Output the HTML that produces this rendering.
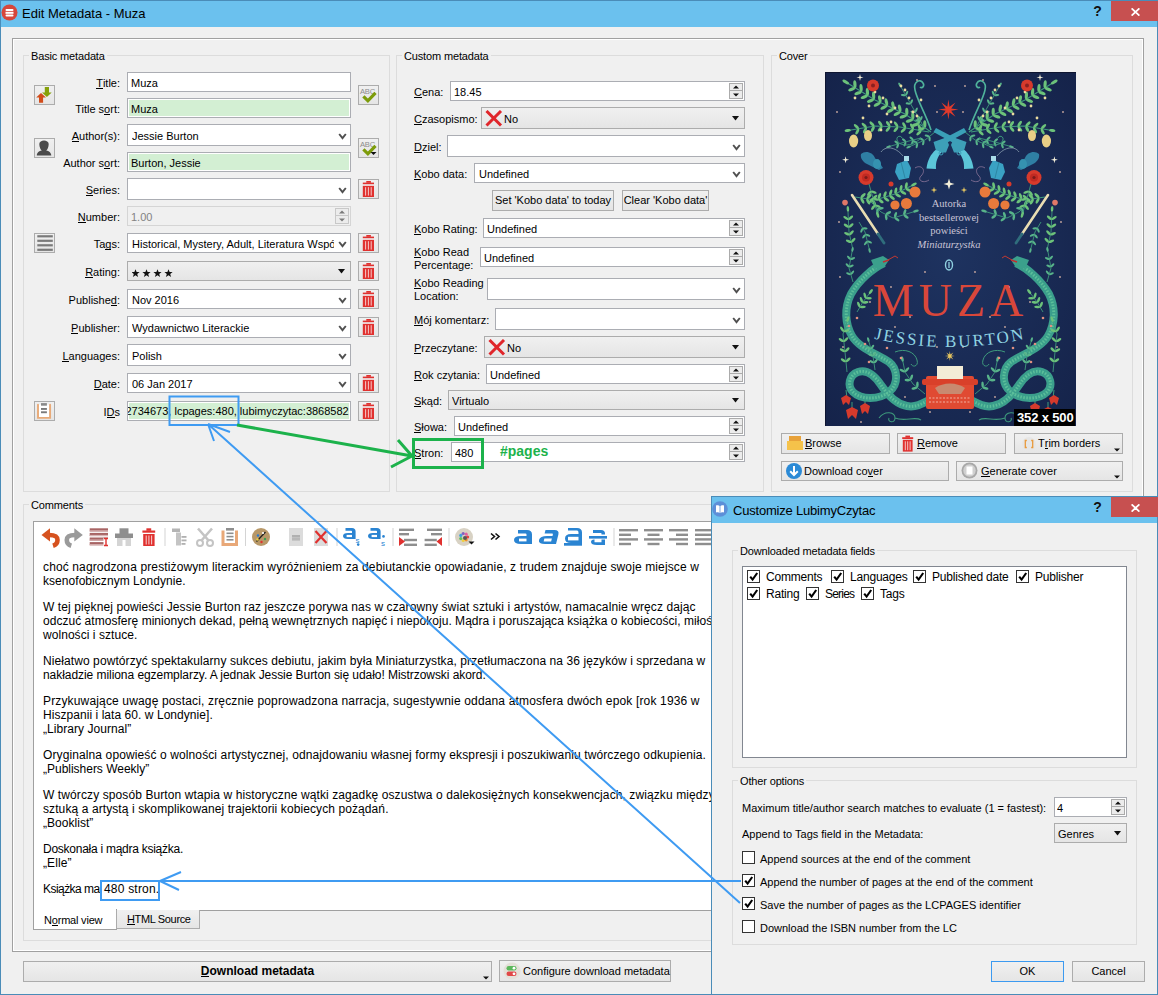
<!DOCTYPE html>
<html><head><meta charset="utf-8"><title>Edit Metadata - Muza</title><style>
*{box-sizing:border-box;margin:0;padding:0}
html,body{width:1158px;height:995px;overflow:hidden;background:#f0f0f0;font-family:"Liberation Sans",sans-serif;color:#000}
body>div,body>svg{position:absolute}
.t{position:absolute;white-space:nowrap}
u{text-decoration:none;border-bottom:1px solid currentColor;display:inline-block;line-height:10px}
.inp{position:absolute;background:#fff;border:1px solid #abadb3;overflow:hidden}
.inp .it{position:absolute;top:1px;white-space:nowrap}
.green{box-shadow:inset 0 0 0 1px #fff;background:#d3efd3}
.dis{background:#f0f0f0;border-color:#d5d5d5;color:#838383}
.dis .spin{border-color:#c8c8c8}.dis .sp1{border-color:#c8c8c8}.dis path{fill:#7a7a7a}
.bcombo{background:linear-gradient(#f0f0f0,#e5e5e5);border-color:#acacac}
.btn{position:absolute;background:linear-gradient(#f0f0f0,#e5e5e5);border:1px solid #acacac}
.btn .bt{position:absolute;top:0;white-space:nowrap}
.ib{position:absolute;background:linear-gradient(#f0f0f0,#e5e5e5);border:1px solid #acacac}
.ib svg{position:absolute;left:0;top:0}
.spin{position:absolute;right:1px;top:1px;bottom:1px;width:14px;border:1px solid #ababab;background:#ececec}
.sp1,.sp2{position:absolute;left:0;right:0;display:flex;align-items:center;justify-content:center}
.sp1{top:0;height:50%;border-bottom:1px solid #ababab}
.sp2{bottom:0;height:50%}
.gb{position:absolute;border:1px solid #dcdcdc}
.cb{position:absolute;width:13px;height:13px;border:1px solid #333;background:#fff}
</style></head><body>
<div style="left:0;top:0;width:1158px;height:995px;border:1px solid #4a8cb8;background:#f0f0f0"></div>
<div style="left:1px;top:1px;width:1156px;height:26px;background:#6bc1ee"></div>
<svg style="left:1px;top:4px" width="17" height="17" viewBox="0 0 17 17"><circle cx="8.5" cy="8.5" r="8" fill="#d6473b"/><rect x="4.5" y="5" width="8" height="2" rx="1" fill="#fff"/><rect x="4.5" y="7.8" width="8" height="2" fill="#fff"/><rect x="4.5" y="10.6" width="8" height="2" rx="1" fill="#fff"/></svg>
<div class="t" style="left:22px;top:6.10px;font-size:13px;line-height:16px;color:#000">Edit Metadata - Muza</div>
<div class="t" style="left:1093.3px;top:3.45px;font-size:14px;line-height:16px;font-weight:bold;color:#111">?</div>
<div style="left:1111px;top:1px;width:47px;height:20px;background:#c75050"></div>
<svg style="left:1130.5px;top:7.5px" width="9" height="8" viewBox="0 0 9 8"><path d="M0.6 0.4 L8.4 7.6 M8.4 0.4 L0.6 7.6" stroke="#fff" stroke-width="1.8"/></svg>
<div style="left:12px;top:38px;width:1132px;height:914px;border:1px solid #a0a0a0;box-shadow:inset 0 0 0 1px #fff"></div>
<div class="gb" style="left:23px;top:55px;width:367px;height:437px;"></div>
<div class="gb" style="left:396px;top:55px;width:368px;height:437px;"></div>
<div class="gb" style="left:771px;top:55px;width:362px;height:437px;"></div>
<div class="gb" style="left:23px;top:504px;width:1110px;height:437px;"></div>
<div class="t" style="left:29px;top:48.2px;font-size:11px;line-height:16px;background:#f0f0f0;padding:0 2px;letter-spacing:-0.15px">Basic metadata</div>
<div class="t" style="left:402px;top:48.2px;font-size:11px;line-height:16px;background:#f0f0f0;padding:0 2px;letter-spacing:-0.15px">Custom metadata</div>
<div class="t" style="left:777px;top:48.2px;font-size:11px;line-height:16px;background:#f0f0f0;padding:0 2px;letter-spacing:-0.15px">Cover</div>
<div class="t" style="left:29px;top:497.2px;font-size:11px;line-height:16px;background:#f0f0f0;padding:0 2px;letter-spacing:-0.15px">Comments</div>
<div class="t" style="right:1038px;top:74.99px;font-size:11px;line-height:16px;text-align:right;"><u>T</u>itle:</div>
<div class="inp" style="left:127px;top:72px;width:224px;height:20px;"><span class="it" style="left:3px;line-height:18px;font-size:11px;">Muza</span></div>
<div class="t" style="right:1038px;top:100.99px;font-size:11px;line-height:16px;text-align:right;">Title s<u>o</u>rt:</div>
<div class="inp green" style="left:127px;top:98px;width:224px;height:20px;"><span class="it" style="left:3px;line-height:18px;font-size:11px;">Muza</span></div>
<div class="t" style="right:1038px;top:127.99px;font-size:11px;line-height:16px;text-align:right;"><u>A</u>uthor(s):</div>
<div class="inp" style="left:127px;top:124px;width:224px;height:22px;"><span class="it" style="left:4px;line-height:20px;font-size:11px;right:16px;overflow:hidden;">Jessie Burton</span><svg width="9" height="7" viewBox="0 0 9 7" style="position:absolute;right:3px;top:50%;margin-top:-2.5px"><path d="M1.2 1 L4.5 5.2 L7.8 1" fill="none" stroke="#505050" stroke-width="1.9"/></svg></div>
<div class="t" style="right:1038px;top:154.99px;font-size:11px;line-height:16px;text-align:right;">Author s<u>o</u>rt:</div>
<div class="inp green" style="left:127px;top:152px;width:224px;height:20px;"><span class="it" style="left:3px;line-height:18px;font-size:11px;">Burton, Jessie</span></div>
<div class="t" style="right:1038px;top:181.99px;font-size:11px;line-height:16px;text-align:right;"><u>S</u>eries:</div>
<div class="inp" style="left:127px;top:178px;width:224px;height:22px;"><span class="it" style="left:4px;line-height:20px;font-size:11px;right:16px;overflow:hidden;"></span><svg width="9" height="7" viewBox="0 0 9 7" style="position:absolute;right:3px;top:50%;margin-top:-2.5px"><path d="M1.2 1 L4.5 5.2 L7.8 1" fill="none" stroke="#505050" stroke-width="1.9"/></svg></div>
<div class="t" style="right:1038px;top:208.99px;font-size:11px;line-height:16px;text-align:right;"><u>N</u>umber:</div>
<div class="inp dis" style="left:127px;top:206px;width:224px;height:20px;"><span class="it" style="left:3px;line-height:18px;font-size:11px;right:16px;overflow:hidden;">1.00</span><div class="spin"><div class="sp1"><svg width="6" height="4" viewBox="0 0 6 4"><path d="M0 3.5 L6 3.5 L3 0.5Z" fill="#111"/></svg></div><div class="sp2"><svg width="6" height="4" viewBox="0 0 6 4"><path d="M0 0.5 L6 0.5 L3 3.5Z" fill="#111"/></svg></div></div></div>
<div class="t" style="right:1038px;top:235.99px;font-size:11px;line-height:16px;text-align:right;">Ta<u>g</u>s:</div>
<div class="inp" style="left:127px;top:233px;width:224px;height:20px;"><span class="it" style="left:4px;line-height:18px;font-size:11px;right:16px;overflow:hidden;">Historical, Mystery, Adult, Literatura Współczesna</span><svg width="9" height="7" viewBox="0 0 9 7" style="position:absolute;right:3px;top:50%;margin-top:-2.5px"><path d="M1.2 1 L4.5 5.2 L7.8 1" fill="none" stroke="#505050" stroke-width="1.9"/></svg></div>
<div class="t" style="right:1038px;top:263.99px;font-size:11px;line-height:16px;text-align:right;"><u>R</u>ating:</div>
<div class="inp bcombo" style="left:127px;top:261px;width:224px;height:20px;"><span class="it" style="left:3px;line-height:18px;font-size:11px;right:16px;overflow:hidden;"></span><svg width="9" height="5" viewBox="0 0 9 5" style="position:absolute;right:4px;top:50%;margin-top:-2px"><path d="M1 0 L8 0 L4.5 4.5Z" fill="#111"/></svg></div>
<svg width="50" height="14" viewBox="0 0 50 14" style="left:132px;top:265px"><path transform="translate(3.5 8.5)" d="M0 -4.3 L1.1 -1.4 L4.1 -1.4 L1.7 0.5 L2.6 3.6 L0 1.8 L-2.6 3.6 L-1.7 0.5 L-4.1 -1.4 L-1.1 -1.4Z" fill="#111"/><path transform="translate(14.5 8.5)" d="M0 -4.3 L1.1 -1.4 L4.1 -1.4 L1.7 0.5 L2.6 3.6 L0 1.8 L-2.6 3.6 L-1.7 0.5 L-4.1 -1.4 L-1.1 -1.4Z" fill="#111"/><path transform="translate(25.5 8.5)" d="M0 -4.3 L1.1 -1.4 L4.1 -1.4 L1.7 0.5 L2.6 3.6 L0 1.8 L-2.6 3.6 L-1.7 0.5 L-4.1 -1.4 L-1.1 -1.4Z" fill="#111"/><path transform="translate(36.5 8.5)" d="M0 -4.3 L1.1 -1.4 L4.1 -1.4 L1.7 0.5 L2.6 3.6 L0 1.8 L-2.6 3.6 L-1.7 0.5 L-4.1 -1.4 L-1.1 -1.4Z" fill="#111"/></svg>
<div class="t" style="right:1038px;top:291.99px;font-size:11px;line-height:16px;text-align:right;">Publishe<u>d</u>:</div>
<div class="inp" style="left:127px;top:289px;width:224px;height:20px;"><span class="it" style="left:4px;line-height:18px;font-size:11px;right:16px;overflow:hidden;">Nov 2016</span><svg width="9" height="7" viewBox="0 0 9 7" style="position:absolute;right:3px;top:50%;margin-top:-2.5px"><path d="M1.2 1 L4.5 5.2 L7.8 1" fill="none" stroke="#505050" stroke-width="1.9"/></svg></div>
<div class="t" style="right:1038px;top:319.99px;font-size:11px;line-height:16px;text-align:right;"><u>P</u>ublisher:</div>
<div class="inp" style="left:127px;top:316px;width:224px;height:22px;"><span class="it" style="left:4px;line-height:20px;font-size:11px;right:16px;overflow:hidden;">Wydawnictwo Literackie</span><svg width="9" height="7" viewBox="0 0 9 7" style="position:absolute;right:3px;top:50%;margin-top:-2.5px"><path d="M1.2 1 L4.5 5.2 L7.8 1" fill="none" stroke="#505050" stroke-width="1.9"/></svg></div>
<div class="t" style="right:1038px;top:347.99px;font-size:11px;line-height:16px;text-align:right;"><u>L</u>anguages:</div>
<div class="inp" style="left:127px;top:344px;width:224px;height:22px;"><span class="it" style="left:4px;line-height:20px;font-size:11px;right:16px;overflow:hidden;">Polish</span><svg width="9" height="7" viewBox="0 0 9 7" style="position:absolute;right:3px;top:50%;margin-top:-2.5px"><path d="M1.2 1 L4.5 5.2 L7.8 1" fill="none" stroke="#505050" stroke-width="1.9"/></svg></div>
<div class="t" style="right:1038px;top:375.99px;font-size:11px;line-height:16px;text-align:right;"><u>D</u>ate:</div>
<div class="inp" style="left:127px;top:373px;width:224px;height:20px;"><span class="it" style="left:4px;line-height:18px;font-size:11px;right:16px;overflow:hidden;">06 Jan 2017</span><svg width="9" height="7" viewBox="0 0 9 7" style="position:absolute;right:3px;top:50%;margin-top:-2.5px"><path d="M1.2 1 L4.5 5.2 L7.8 1" fill="none" stroke="#505050" stroke-width="1.9"/></svg></div>
<div class="t" style="right:1038px;top:403.99px;font-size:11px;line-height:16px;text-align:right;">I<u>D</u>s</div>
<div class="inp green" style="left:127px;top:401px;width:224px;height:20px;"><span class="it" style="left:3px;line-height:18px;font-size:11px;"></span></div>
<div style="left:128px;top:402px;width:222px;height:18px;overflow:hidden"><span class="t" style="left:-2.5px;top:1px;font-size:11px;line-height:16px">2734673, lcpages:480, lubimyczytac:3868582</span></div>
<div class="ib" style="left:34px;top:85px;width:21px;height:20px;"><svg width="20" height="18" viewBox="0 0 20 18" style=""><path d="M6 7 L11 11.6 L8.1 11.6 L8.1 16.8 L4 16.8 L4 11.6 L1.2 11.6Z" fill="#d24c1a"/><path d="M9.8 1.1 L14 1.1 L14 6.4 L16.7 6.4 L11.9 10.9 L7 6.4 L9.8 6.4Z" fill="#86a10a"/></svg></div>
<div class="ib" style="left:34px;top:138px;width:21px;height:20px;"><svg width="20" height="18" viewBox="0 0 20 18" style=""><path d="M4.3 5 C4.3 0.3 13.7 0.3 13.7 5 C13.7 8.5 12.3 10.6 11.2 11.6 C14 12.3 16 13.3 16.3 16.6 L1.8 16.6 C2 13.3 4 12.3 6.8 11.6 C5.7 10.6 4.3 8.5 4.3 5Z" fill="#4a4a4a"/></svg></div>
<div class="ib" style="left:34px;top:233px;width:21px;height:20px;"><svg width="20" height="18" viewBox="0 0 20 18" style=""><rect x="2.3" y="1.2" width="15.5" height="2.2" fill="#7a7a7a"/><rect x="2.3" y="5.7" width="15.5" height="2.2" fill="#7a7a7a"/><rect x="2.3" y="10.2" width="15.5" height="2.2" fill="#7a7a7a"/><rect x="2.3" y="14.7" width="15.5" height="2.2" fill="#7a7a7a"/></svg></div>
<div class="ib" style="left:34px;top:401px;width:21px;height:20px;"><svg width="20" height="18" viewBox="0 0 20 18" style=""><rect x="3.9" y="2.6" width="10.3" height="12.4" fill="#fff"/><path d="M3 2.8 V15.9 H15.1 V2.8" fill="none" stroke="#e8aa78" stroke-width="1.9" stroke-linecap="round"/><rect x="6" y="1.1" width="5.9" height="2.6" fill="#8a8a8a"/><rect x="6" y="6" width="5.9" height="1.9" fill="#7a7a7a"/><rect x="6" y="9.3" width="5.9" height="1.9" fill="#7a7a7a"/></svg></div>
<div class="ib" style="left:358px;top:85px;width:21px;height:20px;"><svg width="20" height="18" viewBox="0 0 20 18" style=""><text x="1" y="7.8" font-family="Liberation Sans" font-size="7.6" letter-spacing="-0.2" fill="#8c8c8c">ABC</text><path d="M4.4 10.3 L8.9 14.8 L16.5 6.8" fill="none" stroke="#7d9c0a" stroke-width="3.2"/></svg></div>
<div class="ib" style="left:358px;top:138px;width:21px;height:20px;"><svg width="20" height="18" viewBox="0 0 20 18" style=""><text x="1" y="7.8" font-family="Liberation Sans" font-size="7.6" letter-spacing="-0.2" fill="#8c8c8c">ABC</text><path d="M4.4 10.3 L8.9 14.8 L16.5 6.8" fill="none" stroke="#7d9c0a" stroke-width="3.2"/><path d="M11.5 13 L17.5 13 L14.5 16Z" fill="#111"/></svg></div>
<div class="ib" style="left:358px;top:179px;width:21px;height:20px;"><svg width="19" height="18" viewBox="0 0 19 18" style=""><rect x="3.8" y="2.6" width="11.2" height="1.6" fill="#e0312f"/><rect x="7.3" y="1" width="4.6" height="1.8" fill="#e0312f"/><rect x="3.8" y="5" width="11.2" height="0.8" fill="#f0c8c8"/><path d="M3.8 6 H15 V17 H3.8Z" fill="#e0312f"/><path d="M6.6 7.2 V15.6 M9.4 7.2 V15.6 M12.2 7.2 V15.6" stroke="#f6c8c8" stroke-width="1"/></svg></div>
<div class="ib" style="left:358px;top:233px;width:21px;height:20px;"><svg width="19" height="18" viewBox="0 0 19 18" style=""><rect x="3.8" y="2.6" width="11.2" height="1.6" fill="#e0312f"/><rect x="7.3" y="1" width="4.6" height="1.8" fill="#e0312f"/><rect x="3.8" y="5" width="11.2" height="0.8" fill="#f0c8c8"/><path d="M3.8 6 H15 V17 H3.8Z" fill="#e0312f"/><path d="M6.6 7.2 V15.6 M9.4 7.2 V15.6 M12.2 7.2 V15.6" stroke="#f6c8c8" stroke-width="1"/></svg></div>
<div class="ib" style="left:358px;top:261px;width:21px;height:20px;"><svg width="19" height="18" viewBox="0 0 19 18" style=""><rect x="3.8" y="2.6" width="11.2" height="1.6" fill="#e0312f"/><rect x="7.3" y="1" width="4.6" height="1.8" fill="#e0312f"/><rect x="3.8" y="5" width="11.2" height="0.8" fill="#f0c8c8"/><path d="M3.8 6 H15 V17 H3.8Z" fill="#e0312f"/><path d="M6.6 7.2 V15.6 M9.4 7.2 V15.6 M12.2 7.2 V15.6" stroke="#f6c8c8" stroke-width="1"/></svg></div>
<div class="ib" style="left:358px;top:289px;width:21px;height:20px;"><svg width="19" height="18" viewBox="0 0 19 18" style=""><rect x="3.8" y="2.6" width="11.2" height="1.6" fill="#e0312f"/><rect x="7.3" y="1" width="4.6" height="1.8" fill="#e0312f"/><rect x="3.8" y="5" width="11.2" height="0.8" fill="#f0c8c8"/><path d="M3.8 6 H15 V17 H3.8Z" fill="#e0312f"/><path d="M6.6 7.2 V15.6 M9.4 7.2 V15.6 M12.2 7.2 V15.6" stroke="#f6c8c8" stroke-width="1"/></svg></div>
<div class="ib" style="left:358px;top:317px;width:21px;height:20px;"><svg width="19" height="18" viewBox="0 0 19 18" style=""><rect x="3.8" y="2.6" width="11.2" height="1.6" fill="#e0312f"/><rect x="7.3" y="1" width="4.6" height="1.8" fill="#e0312f"/><rect x="3.8" y="5" width="11.2" height="0.8" fill="#f0c8c8"/><path d="M3.8 6 H15 V17 H3.8Z" fill="#e0312f"/><path d="M6.6 7.2 V15.6 M9.4 7.2 V15.6 M12.2 7.2 V15.6" stroke="#f6c8c8" stroke-width="1"/></svg></div>
<div class="ib" style="left:358px;top:373px;width:21px;height:20px;"><svg width="19" height="18" viewBox="0 0 19 18" style=""><rect x="3.8" y="2.6" width="11.2" height="1.6" fill="#e0312f"/><rect x="7.3" y="1" width="4.6" height="1.8" fill="#e0312f"/><rect x="3.8" y="5" width="11.2" height="0.8" fill="#f0c8c8"/><path d="M3.8 6 H15 V17 H3.8Z" fill="#e0312f"/><path d="M6.6 7.2 V15.6 M9.4 7.2 V15.6 M12.2 7.2 V15.6" stroke="#f6c8c8" stroke-width="1"/></svg></div>
<div class="ib" style="left:358px;top:401px;width:21px;height:20px;"><svg width="19" height="18" viewBox="0 0 19 18" style=""><rect x="3.8" y="2.6" width="11.2" height="1.6" fill="#e0312f"/><rect x="7.3" y="1" width="4.6" height="1.8" fill="#e0312f"/><rect x="3.8" y="5" width="11.2" height="0.8" fill="#f0c8c8"/><path d="M3.8 6 H15 V17 H3.8Z" fill="#e0312f"/><path d="M6.6 7.2 V15.6 M9.4 7.2 V15.6 M12.2 7.2 V15.6" stroke="#f6c8c8" stroke-width="1"/></svg></div>
<div class="t" style="left:414px;top:83.99px;font-size:11px;line-height:16px;"><u>C</u>ena:</div>
<div class="inp" style="left:450px;top:81px;width:295px;height:20px;"><span class="it" style="left:3px;line-height:18px;font-size:11px;right:16px;overflow:hidden;">18.45</span><div class="spin"><div class="sp1"><svg width="6" height="4" viewBox="0 0 6 4"><path d="M0 3.5 L6 3.5 L3 0.5Z" fill="#111"/></svg></div><div class="sp2"><svg width="6" height="4" viewBox="0 0 6 4"><path d="M0 0.5 L6 0.5 L3 3.5Z" fill="#111"/></svg></div></div></div>
<div class="t" style="left:414px;top:110.99px;font-size:11px;line-height:16px;"><u>C</u>zasopismo:</div>
<div class="inp bcombo" style="left:481px;top:107px;width:264px;height:22px;"><svg width="18" height="17" viewBox="0 0 18 17" style="position:absolute;left:3px;top:2px"><path d="M1.5 1 L16 15.5 M16 1 L1.5 15.5" stroke="#e0262b" stroke-width="3" stroke-linecap="butt"/></svg><span class="it" style="left:22px;line-height:20px;font-size:11px;top:1px">No</span><svg width="9" height="5" viewBox="0 0 9 5" style="position:absolute;right:4px;top:50%;margin-top:-2px"><path d="M1 0 L8 0 L4.5 4.5Z" fill="#111"/></svg></div>
<div class="t" style="left:414px;top:138.99px;font-size:11px;line-height:16px;"><u>D</u>ziel:</div>
<div class="inp" style="left:447px;top:135px;width:298px;height:22px;"><span class="it" style="left:4px;line-height:20px;font-size:11px;right:16px;overflow:hidden;"></span><svg width="9" height="7" viewBox="0 0 9 7" style="position:absolute;right:3px;top:50%;margin-top:-2.5px"><path d="M1.2 1 L4.5 5.2 L7.8 1" fill="none" stroke="#505050" stroke-width="1.9"/></svg></div>
<div class="t" style="left:414px;top:165.99px;font-size:11px;line-height:16px;"><u>K</u>obo data:</div>
<div class="inp" style="left:474px;top:163px;width:271px;height:20px;"><span class="it" style="left:4px;line-height:18px;font-size:11px;right:16px;overflow:hidden;">Undefined</span><svg width="9" height="7" viewBox="0 0 9 7" style="position:absolute;right:3px;top:50%;margin-top:-2.5px"><path d="M1.2 1 L4.5 5.2 L7.8 1" fill="none" stroke="#505050" stroke-width="1.9"/></svg></div>
<div class="t" style="left:414px;top:220.99px;font-size:11px;line-height:16px;"><u>K</u>obo Rating:</div>
<div class="inp" style="left:483px;top:218px;width:262px;height:20px;"><span class="it" style="left:3px;line-height:18px;font-size:11px;right:16px;overflow:hidden;">Undefined</span><div class="spin"><div class="sp1"><svg width="6" height="4" viewBox="0 0 6 4"><path d="M0 3.5 L6 3.5 L3 0.5Z" fill="#111"/></svg></div><div class="sp2"><svg width="6" height="4" viewBox="0 0 6 4"><path d="M0 0.5 L6 0.5 L3 3.5Z" fill="#111"/></svg></div></div></div>
<div class="inp" style="left:480px;top:247px;width:265px;height:20px;"><span class="it" style="left:3px;line-height:18px;font-size:11px;right:16px;overflow:hidden;">Undefined</span><div class="spin"><div class="sp1"><svg width="6" height="4" viewBox="0 0 6 4"><path d="M0 3.5 L6 3.5 L3 0.5Z" fill="#111"/></svg></div><div class="sp2"><svg width="6" height="4" viewBox="0 0 6 4"><path d="M0 0.5 L6 0.5 L3 3.5Z" fill="#111"/></svg></div></div></div>
<div class="inp" style="left:487px;top:278px;width:258px;height:22px;"><span class="it" style="left:4px;line-height:20px;font-size:11px;right:16px;overflow:hidden;"></span><svg width="9" height="7" viewBox="0 0 9 7" style="position:absolute;right:3px;top:50%;margin-top:-2.5px"><path d="M1.2 1 L4.5 5.2 L7.8 1" fill="none" stroke="#505050" stroke-width="1.9"/></svg></div>
<div class="t" style="left:414px;top:311.99px;font-size:11px;line-height:16px;"><u>M</u>ój komentarz:</div>
<div class="inp" style="left:495px;top:308px;width:250px;height:22px;"><span class="it" style="left:4px;line-height:20px;font-size:11px;right:16px;overflow:hidden;"></span><svg width="9" height="7" viewBox="0 0 9 7" style="position:absolute;right:3px;top:50%;margin-top:-2.5px"><path d="M1.2 1 L4.5 5.2 L7.8 1" fill="none" stroke="#505050" stroke-width="1.9"/></svg></div>
<div class="t" style="left:414px;top:339.99px;font-size:11px;line-height:16px;"><u>P</u>rzeczytane:</div>
<div class="inp bcombo" style="left:484px;top:336px;width:261px;height:22px;"><svg width="18" height="17" viewBox="0 0 18 17" style="position:absolute;left:3px;top:2px"><path d="M1.5 1 L16 15.5 M16 1 L1.5 15.5" stroke="#e0262b" stroke-width="3" stroke-linecap="butt"/></svg><span class="it" style="left:22px;line-height:20px;font-size:11px;top:1px">No</span><svg width="9" height="5" viewBox="0 0 9 5" style="position:absolute;right:4px;top:50%;margin-top:-2px"><path d="M1 0 L8 0 L4.5 4.5Z" fill="#111"/></svg></div>
<div class="t" style="left:414px;top:366.99px;font-size:11px;line-height:16px;"><u>R</u>ok czytania:</div>
<div class="inp" style="left:486px;top:364px;width:259px;height:20px;"><span class="it" style="left:3px;line-height:18px;font-size:11px;right:16px;overflow:hidden;">Undefined</span><div class="spin"><div class="sp1"><svg width="6" height="4" viewBox="0 0 6 4"><path d="M0 3.5 L6 3.5 L3 0.5Z" fill="#111"/></svg></div><div class="sp2"><svg width="6" height="4" viewBox="0 0 6 4"><path d="M0 0.5 L6 0.5 L3 3.5Z" fill="#111"/></svg></div></div></div>
<div class="t" style="left:414px;top:392.99px;font-size:11px;line-height:16px;"><u>S</u>kąd:</div>
<div class="inp bcombo" style="left:448px;top:390px;width:297px;height:20px;"><span class="it" style="left:3px;line-height:18px;font-size:11px;right:16px;overflow:hidden;">Virtualo</span><svg width="9" height="5" viewBox="0 0 9 5" style="position:absolute;right:4px;top:50%;margin-top:-2px"><path d="M1 0 L8 0 L4.5 4.5Z" fill="#111"/></svg></div>
<div class="t" style="left:414px;top:418.99px;font-size:11px;line-height:16px;"><u>S</u>łowa:</div>
<div class="inp" style="left:454px;top:416px;width:291px;height:20px;"><span class="it" style="left:3px;line-height:18px;font-size:11px;right:16px;overflow:hidden;">Undefined</span><div class="spin"><div class="sp1"><svg width="6" height="4" viewBox="0 0 6 4"><path d="M0 3.5 L6 3.5 L3 0.5Z" fill="#111"/></svg></div><div class="sp2"><svg width="6" height="4" viewBox="0 0 6 4"><path d="M0 0.5 L6 0.5 L3 3.5Z" fill="#111"/></svg></div></div></div>
<div class="t" style="left:414px;top:444.99px;font-size:11px;line-height:16px;"><u>S</u>tron:</div>
<div class="inp" style="left:451px;top:442px;width:294px;height:20px;"><span class="it" style="left:3px;line-height:18px;font-size:11px;right:16px;overflow:hidden;">480</span><div class="spin"><div class="sp1"><svg width="6" height="4" viewBox="0 0 6 4"><path d="M0 3.5 L6 3.5 L3 0.5Z" fill="#111"/></svg></div><div class="sp2"><svg width="6" height="4" viewBox="0 0 6 4"><path d="M0 0.5 L6 0.5 L3 3.5Z" fill="#111"/></svg></div></div></div>
<div class="t" style="left:414px;top:243.69px;font-size:11px;line-height:16px;"><u>K</u>obo Read</div>
<div class="t" style="left:414px;top:256.69px;font-size:11px;line-height:16px;">Percentage:</div>
<div class="t" style="left:414px;top:274.69px;font-size:11px;line-height:16px;"><u>K</u>obo Reading</div>
<div class="t" style="left:414px;top:287.69px;font-size:11px;line-height:16px;">Location:</div>
<div class="btn" style="left:492px;top:190px;width:122px;height:21px;"><span class="bt" style="left:0;right:0;text-align:center;line-height:19px;font-size:11px;">Set 'Kobo data' to today</span></div>
<div class="btn" style="left:622px;top:190px;width:87px;height:21px;"><span class="bt" style="left:0;right:0;text-align:center;line-height:19px;font-size:11px;">Clear 'Kobo data'</span></div>
<svg width="251" height="354" viewBox="0 0 251 354" style="left:825px;top:72px">
<defs><radialGradient id="cg" cx="50%" cy="50%" r="70%"><stop offset="0" stop-color="#1e3360"/><stop offset="1" stop-color="#15234a"/></radialGradient>
<path id="arc" d="M46 266 Q125 284 204 266"/></defs>
<rect width="251" height="354" fill="url(#cg)"/>
<rect width="251" height="1" fill="#0e1530"/><rect width="1" height="354" fill="#0e1530"/>
<g><path d="M106.0 60.0 L80.0 42.0 L50.0 28.0 L24.0 12.0" fill="none" stroke="#3e9a7c" stroke-width="1.1"/><ellipse cx="99.8" cy="52.1" rx="3.8" ry="1.6" transform="rotate(-92 99.8 52.1)" fill="#6cc27a"/><ellipse cx="96.4" cy="57.0" rx="3.8" ry="1.6" transform="rotate(162 96.4 57.0)" fill="#6cc27a"/><ellipse cx="93.8" cy="47.9" rx="3.8" ry="1.6" transform="rotate(-92 93.8 47.9)" fill="#6cc27a"/><ellipse cx="90.4" cy="52.8" rx="3.8" ry="1.6" transform="rotate(162 90.4 52.8)" fill="#6cc27a"/><ellipse cx="87.8" cy="43.7" rx="3.8" ry="1.6" transform="rotate(-92 87.8 43.7)" fill="#6cc27a"/><ellipse cx="84.4" cy="48.7" rx="3.8" ry="1.6" transform="rotate(162 84.4 48.7)" fill="#6cc27a"/><ellipse cx="81.8" cy="39.6" rx="3.8" ry="1.6" transform="rotate(-92 81.8 39.6)" fill="#6cc27a"/><ellipse cx="78.3" cy="44.5" rx="3.8" ry="1.6" transform="rotate(162 78.3 44.5)" fill="#6cc27a"/><ellipse cx="74.7" cy="36.2" rx="3.8" ry="1.6" transform="rotate(-102 74.7 36.2)" fill="#6cc27a"/><ellipse cx="72.1" cy="41.6" rx="3.8" ry="1.6" transform="rotate(152 72.1 41.6)" fill="#6cc27a"/><ellipse cx="68.0" cy="33.1" rx="3.8" ry="1.6" transform="rotate(-102 68.0 33.1)" fill="#6cc27a"/><ellipse cx="65.5" cy="38.5" rx="3.8" ry="1.6" transform="rotate(152 65.5 38.5)" fill="#6cc27a"/><ellipse cx="61.4" cy="30.0" rx="3.8" ry="1.6" transform="rotate(-102 61.4 30.0)" fill="#6cc27a"/><ellipse cx="58.9" cy="35.4" rx="3.8" ry="1.6" transform="rotate(152 58.9 35.4)" fill="#6cc27a"/><ellipse cx="54.8" cy="26.9" rx="3.8" ry="1.6" transform="rotate(-102 54.8 26.9)" fill="#6cc27a"/><ellipse cx="52.2" cy="32.4" rx="3.8" ry="1.6" transform="rotate(152 52.2 32.4)" fill="#6cc27a"/><ellipse cx="48.6" cy="23.6" rx="3.8" ry="1.6" transform="rotate(-95 48.6 23.6)" fill="#6cc27a"/><ellipse cx="45.5" cy="28.7" rx="3.8" ry="1.6" transform="rotate(158 45.5 28.7)" fill="#6cc27a"/><ellipse cx="42.4" cy="19.8" rx="3.8" ry="1.6" transform="rotate(-95 42.4 19.8)" fill="#6cc27a"/><ellipse cx="39.2" cy="24.9" rx="3.8" ry="1.6" transform="rotate(158 39.2 24.9)" fill="#6cc27a"/><ellipse cx="36.1" cy="15.9" rx="3.8" ry="1.6" transform="rotate(-95 36.1 15.9)" fill="#6cc27a"/><ellipse cx="33.0" cy="21.1" rx="3.8" ry="1.6" transform="rotate(158 33.0 21.1)" fill="#6cc27a"/><ellipse cx="29.9" cy="12.1" rx="3.8" ry="1.6" transform="rotate(-95 29.9 12.1)" fill="#6cc27a"/><ellipse cx="26.8" cy="17.2" rx="3.8" ry="1.6" transform="rotate(158 26.8 17.2)" fill="#6cc27a"/><ellipse cx="20.8" cy="10.0" rx="3.8" ry="1.6" transform="rotate(-148 20.8 10.0)" fill="#6cc27a"/><path d="M104.0 60.0 L75.0 55.0 L50.0 54.0 L26.0 58.0" fill="none" stroke="#3e9a7c" stroke-width="1.1"/><ellipse cx="94.8" cy="55.8" rx="3.2" ry="1.4" transform="rotate(-117 94.8 55.8)" fill="#6cc27a"/><ellipse cx="93.9" cy="60.9" rx="3.2" ry="1.4" transform="rotate(137 93.9 60.9)" fill="#6cc27a"/><ellipse cx="87.0" cy="54.4" rx="3.2" ry="1.4" transform="rotate(-117 87.0 54.4)" fill="#6cc27a"/><ellipse cx="86.1" cy="59.6" rx="3.2" ry="1.4" transform="rotate(137 86.1 59.6)" fill="#6cc27a"/><ellipse cx="79.2" cy="53.1" rx="3.2" ry="1.4" transform="rotate(-117 79.2 53.1)" fill="#6cc27a"/><ellipse cx="78.3" cy="58.2" rx="3.2" ry="1.4" transform="rotate(137 78.3 58.2)" fill="#6cc27a"/><ellipse cx="71.1" cy="52.2" rx="3.2" ry="1.4" transform="rotate(-125 71.1 52.2)" fill="#6cc27a"/><ellipse cx="70.9" cy="57.4" rx="3.2" ry="1.4" transform="rotate(129 70.9 57.4)" fill="#6cc27a"/><ellipse cx="63.2" cy="51.9" rx="3.2" ry="1.4" transform="rotate(-125 63.2 51.9)" fill="#6cc27a"/><ellipse cx="63.0" cy="57.1" rx="3.2" ry="1.4" transform="rotate(129 63.0 57.1)" fill="#6cc27a"/><ellipse cx="55.3" cy="51.6" rx="3.2" ry="1.4" transform="rotate(-125 55.3 51.6)" fill="#6cc27a"/><ellipse cx="55.1" cy="56.8" rx="3.2" ry="1.4" transform="rotate(129 55.1 56.8)" fill="#6cc27a"/><ellipse cx="47.0" cy="51.9" rx="3.2" ry="1.4" transform="rotate(-136 47.0 51.9)" fill="#6cc27a"/><ellipse cx="47.8" cy="57.0" rx="3.2" ry="1.4" transform="rotate(117 47.8 57.0)" fill="#6cc27a"/><ellipse cx="39.2" cy="53.2" rx="3.2" ry="1.4" transform="rotate(-136 39.2 53.2)" fill="#6cc27a"/><ellipse cx="40.0" cy="58.3" rx="3.2" ry="1.4" transform="rotate(117 40.0 58.3)" fill="#6cc27a"/><ellipse cx="31.4" cy="54.5" rx="3.2" ry="1.4" transform="rotate(-136 31.4 54.5)" fill="#6cc27a"/><ellipse cx="32.3" cy="59.6" rx="3.2" ry="1.4" transform="rotate(117 32.3 59.6)" fill="#6cc27a"/><ellipse cx="22.8" cy="58.5" rx="3.2" ry="1.4" transform="rotate(171 22.8 58.5)" fill="#6cc27a"/><path d="M100.0 57.0 L88.0 36.0 L76.0 15.0" fill="none" stroke="#3e9a7c" stroke-width="0.9"/><ellipse cx="96.2" cy="46.3" rx="2.5" ry="1.1" transform="rotate(-67 96.2 46.3)" fill="#58b48a"/><ellipse cx="92.7" cy="48.3" rx="2.5" ry="1.1" transform="rotate(-173 92.7 48.3)" fill="#58b48a"/><ellipse cx="91.4" cy="37.9" rx="2.5" ry="1.1" transform="rotate(-67 91.4 37.9)" fill="#58b48a"/><ellipse cx="87.9" cy="39.9" rx="2.5" ry="1.1" transform="rotate(-173 87.9 39.9)" fill="#58b48a"/><ellipse cx="86.6" cy="29.5" rx="2.5" ry="1.1" transform="rotate(-67 86.6 29.5)" fill="#58b48a"/><ellipse cx="83.1" cy="31.5" rx="2.5" ry="1.1" transform="rotate(-173 83.1 31.5)" fill="#58b48a"/><ellipse cx="81.8" cy="21.1" rx="2.5" ry="1.1" transform="rotate(-67 81.8 21.1)" fill="#58b48a"/><ellipse cx="78.3" cy="23.1" rx="2.5" ry="1.1" transform="rotate(-173 78.3 23.1)" fill="#58b48a"/><ellipse cx="74.8" cy="12.8" rx="2.5" ry="1.1" transform="rotate(-120 74.8 12.8)" fill="#58b48a"/><path d="M106 58 C100 40 92 28 90 18 C88 10 95 6 98 11 C100 14 97 17 95 15" fill="none" stroke="#4fb39b" stroke-width="1.6"/><path d="M96.0 66.0 L80.0 70.0 L66.0 74.0" fill="none" stroke="#3e9a7c" stroke-width="0.9"/><ellipse cx="86.5" cy="66.3" rx="2.5" ry="1.1" transform="rotate(-141 86.5 66.3)" fill="#58b48a"/><ellipse cx="87.5" cy="70.2" rx="2.5" ry="1.1" transform="rotate(113 87.5 70.2)" fill="#58b48a"/><ellipse cx="79.0" cy="68.2" rx="2.5" ry="1.1" transform="rotate(-141 79.0 68.2)" fill="#58b48a"/><ellipse cx="80.0" cy="72.1" rx="2.5" ry="1.1" transform="rotate(113 80.0 72.1)" fill="#58b48a"/><ellipse cx="71.5" cy="70.4" rx="2.5" ry="1.1" transform="rotate(-143 71.5 70.4)" fill="#58b48a"/><ellipse cx="72.6" cy="74.2" rx="2.5" ry="1.1" transform="rotate(111 72.6 74.2)" fill="#58b48a"/><ellipse cx="63.6" cy="74.7" rx="2.5" ry="1.1" transform="rotate(164 63.6 74.7)" fill="#58b48a"/><path d="M110.0 60.0 L100.0 68.0 L86.0 74.0" fill="none" stroke="#3e9a7c" stroke-width="0.9"/><ellipse cx="102.1" cy="63.8" rx="2.5" ry="1.1" transform="rotate(-166 102.1 63.8)" fill="#58b48a"/><ellipse cx="104.6" cy="66.9" rx="2.5" ry="1.1" transform="rotate(88 104.6 66.9)" fill="#58b48a"/><ellipse cx="96.7" cy="67.2" rx="2.5" ry="1.1" transform="rotate(-150 96.7 67.2)" fill="#58b48a"/><ellipse cx="98.3" cy="70.9" rx="2.5" ry="1.1" transform="rotate(104 98.3 70.9)" fill="#58b48a"/><ellipse cx="90.3" cy="70.0" rx="2.5" ry="1.1" transform="rotate(-150 90.3 70.0)" fill="#58b48a"/><ellipse cx="91.9" cy="73.7" rx="2.5" ry="1.1" transform="rotate(104 91.9 73.7)" fill="#58b48a"/><ellipse cx="83.7" cy="75.0" rx="2.5" ry="1.1" transform="rotate(157 83.7 75.0)" fill="#58b48a"/><path d="M96 66 C86 76 74 74 72 68 C71 64 76 63 77 66" fill="none" stroke="#3e9a7c" stroke-width="1"/><circle cx="30" cy="26" r="1.4" fill="#eadca0"/><circle cx="44" cy="34" r="1.4" fill="#eadca0"/><circle cx="58" cy="26" r="1.4" fill="#eadca0"/><circle cx="70" cy="36" r="1.4" fill="#eadca0"/><circle cx="84" cy="26" r="1.4" fill="#eadca0"/><circle cx="92" cy="44" r="1.4" fill="#eadca0"/><circle cx="66" cy="50" r="1.4" fill="#eadca0"/><circle cx="56" cy="58" r="1.4" fill="#eadca0"/><circle cx="80" cy="18" r="1.4" fill="#eadca0"/><circle cx="96" cy="28" r="1.4" fill="#eadca0"/><circle cx="76" cy="14" r="1.4" fill="#eadca0"/><circle cx="88" cy="40" r="1.4" fill="#eadca0"/><circle cx="62" cy="42" r="1.4" fill="#eadca0"/><circle cx="38" cy="46" r="1.4" fill="#eadca0"/><circle cx="50" cy="20" r="1.4" fill="#eadca0"/><ellipse cx="28.6" cy="69" rx="4.6" ry="6.5" fill="#e9cf86"/><ellipse cx="43" cy="63.5" rx="4" ry="5.6" fill="#e9cf86"/><circle cx="48" cy="13.4" r="6" fill="#d63a2c"/><circle cx="48" cy="13.4" r="2" fill="#8a2020"/><path d="M35.0 1.9 L35.7 4.7 L38.5 5.4 L35.7 6.1 L35.0 8.9 L34.3 6.1 L31.5 5.4 L34.3 4.7Z" fill="#f3eed8"/><path d="M20.6 84.2 L21.3 87.0 L24.1 87.7 L21.3 88.4 L20.6 91.2 L19.9 88.4 L17.1 87.7 L19.9 87.0Z" fill="#f3eed8"/><path d="M36 82 C40 78 48 80 50 86 C52 90 56 92 58 96 L54 98 C50 96 46 94 42 92 C38 90 35 86 36 82Z" fill="#2f7fa3"/><ellipse cx="52" cy="92" rx="4" ry="5" fill="#3592b0"/><path d="M72 92 L82 88 L86 96 L84 106 L74 108 L70 100Z" fill="#3aa2c4"/><path d="M76 90 L80 106" stroke="#2a7f9a" stroke-width="0.8"/><rect x="79" y="84" width="5" height="5" fill="#a8dbe8"/><path d="M56 80 C60 74 70 74 78 84" fill="none" stroke="#8aa0b0" stroke-width="0.8"/><path d="M90 96 C96 92 102 98 96 104 C92 108 98 112 104 108" fill="none" stroke="#7a6a90" stroke-width="1"/><path d="M119 66.5 L139 56 L141.5 60 L121.5 71Z" fill="#3aa0b8"/><path d="M108.5 70 L121 65.5 L124 73 L121 80.5 L111.5 80.5Z" fill="#3d9fb8"/><path d="M110.5 78 C106 82 102.5 88 101.5 96.5 L111 97 C110.5 90 112.5 85 116.5 80Z" fill="#5cc6d8"/><circle cx="116" cy="81" r="2" fill="none" stroke="#3d9fb8" stroke-width="1"/><circle cx="41" cy="105.5" r="7.5" fill="#d63a2c"/><circle cx="41" cy="105.5" r="4" fill="#c02a22"/><circle cx="41" cy="105.5" r="1.6" fill="#7a1a1a"/><path d="M30.0 125.0 L50.0 128.0 L70.0 122.0 L86.0 114.0" fill="none" stroke="#3e9a7c" stroke-width="1.1"/><ellipse cx="37.4" cy="128.7" rx="3.2" ry="1.4" transform="rotate(62 37.4 128.7)" fill="#6cc27a"/><ellipse cx="38.1" cy="123.6" rx="3.2" ry="1.4" transform="rotate(-45 38.1 123.6)" fill="#6cc27a"/><ellipse cx="43.2" cy="129.6" rx="3.2" ry="1.4" transform="rotate(62 43.2 129.6)" fill="#6cc27a"/><ellipse cx="44.0" cy="124.5" rx="3.2" ry="1.4" transform="rotate(-45 44.0 124.5)" fill="#6cc27a"/><ellipse cx="49.0" cy="130.5" rx="3.2" ry="1.4" transform="rotate(62 49.0 130.5)" fill="#6cc27a"/><ellipse cx="49.8" cy="125.3" rx="3.2" ry="1.4" transform="rotate(-45 49.8 125.3)" fill="#6cc27a"/><ellipse cx="55.8" cy="129.0" rx="3.2" ry="1.4" transform="rotate(36 55.8 129.0)" fill="#6cc27a"/><ellipse cx="54.4" cy="124.0" rx="3.2" ry="1.4" transform="rotate(-70 54.4 124.0)" fill="#6cc27a"/><ellipse cx="61.5" cy="127.3" rx="3.2" ry="1.4" transform="rotate(36 61.5 127.3)" fill="#6cc27a"/><ellipse cx="60.0" cy="122.3" rx="3.2" ry="1.4" transform="rotate(-70 60.0 122.3)" fill="#6cc27a"/><ellipse cx="67.1" cy="125.6" rx="3.2" ry="1.4" transform="rotate(36 67.1 125.6)" fill="#6cc27a"/><ellipse cx="65.7" cy="120.6" rx="3.2" ry="1.4" transform="rotate(-70 65.7 120.6)" fill="#6cc27a"/><ellipse cx="73.1" cy="123.4" rx="3.2" ry="1.4" transform="rotate(27 73.1 123.4)" fill="#6cc27a"/><ellipse cx="70.8" cy="118.7" rx="3.2" ry="1.4" transform="rotate(-80 70.8 118.7)" fill="#6cc27a"/><ellipse cx="78.4" cy="120.7" rx="3.2" ry="1.4" transform="rotate(27 78.4 120.7)" fill="#6cc27a"/><ellipse cx="76.0" cy="116.1" rx="3.2" ry="1.4" transform="rotate(-80 76.0 116.1)" fill="#6cc27a"/><ellipse cx="83.6" cy="118.1" rx="3.2" ry="1.4" transform="rotate(27 83.6 118.1)" fill="#6cc27a"/><ellipse cx="81.3" cy="113.4" rx="3.2" ry="1.4" transform="rotate(-80 81.3 113.4)" fill="#6cc27a"/><ellipse cx="88.9" cy="112.5" rx="3.2" ry="1.4" transform="rotate(-27 88.9 112.5)" fill="#6cc27a"/><path d="M46.0 130.0 L56.0 140.0 L68.0 146.0 L88.0 140.0" fill="none" stroke="#3e9a7c" stroke-width="0.9"/><ellipse cx="52.4" cy="139.8" rx="3.0" ry="1.3" transform="rotate(98 52.4 139.8)" fill="#58b48a"/><ellipse cx="55.8" cy="136.4" rx="3.0" ry="1.3" transform="rotate(-8 55.8 136.4)" fill="#58b48a"/><ellipse cx="61.2" cy="145.3" rx="3.0" ry="1.3" transform="rotate(80 61.2 145.3)" fill="#58b48a"/><ellipse cx="63.4" cy="141.0" rx="3.0" ry="1.3" transform="rotate(-27 63.4 141.0)" fill="#58b48a"/><ellipse cx="71.9" cy="147.3" rx="3.0" ry="1.3" transform="rotate(36 71.9 147.3)" fill="#58b48a"/><ellipse cx="70.5" cy="142.8" rx="3.0" ry="1.3" transform="rotate(-70 70.5 142.8)" fill="#58b48a"/><ellipse cx="81.1" cy="144.6" rx="3.0" ry="1.3" transform="rotate(36 81.1 144.6)" fill="#58b48a"/><ellipse cx="79.8" cy="140.0" rx="3.0" ry="1.3" transform="rotate(-70 79.8 140.0)" fill="#58b48a"/><ellipse cx="90.9" cy="139.1" rx="3.0" ry="1.3" transform="rotate(-17 90.9 139.1)" fill="#58b48a"/><path d="M44.0 112.0 L48.0 126.0 L52.0 140.0" fill="none" stroke="#3e9a7c" stroke-width="0.9"/><ellipse cx="44.2" cy="121.4" rx="3.0" ry="1.3" transform="rotate(127 44.2 121.4)" fill="#6cc27a"/><ellipse cx="48.8" cy="120.1" rx="3.0" ry="1.3" transform="rotate(21 48.8 120.1)" fill="#6cc27a"/><ellipse cx="46.2" cy="128.4" rx="3.0" ry="1.3" transform="rotate(127 46.2 128.4)" fill="#6cc27a"/><ellipse cx="50.8" cy="127.1" rx="3.0" ry="1.3" transform="rotate(21 50.8 127.1)" fill="#6cc27a"/><ellipse cx="48.2" cy="135.4" rx="3.0" ry="1.3" transform="rotate(127 48.2 135.4)" fill="#6cc27a"/><ellipse cx="52.8" cy="134.1" rx="3.0" ry="1.3" transform="rotate(21 52.8 134.1)" fill="#6cc27a"/><ellipse cx="52.8" cy="142.9" rx="3.0" ry="1.3" transform="rotate(74 52.8 142.9)" fill="#6cc27a"/><circle cx="90" cy="120" r="5.5" fill="#e87a3c"/><circle cx="70" cy="133" r="4.6" fill="#e87a3c"/><circle cx="81.4" cy="131.5" r="5.5" fill="#e87a3c"/><circle cx="66" cy="112" r="2.5" fill="#d63a2c"/><circle cx="20" cy="130.6" r="2.8" fill="#e07868"/><path d="M27 123 L53 162" stroke="#e9ddb2" stroke-width="2.6" stroke-linecap="round"/><path d="M53 162 L59 171" stroke="#2f6d7c" stroke-width="2.8" stroke-linecap="round"/><path d="M28.0 178.0 L24.0 160.0 L23.0 140.0" fill="none" stroke="#3e9a7c" stroke-width="0.9"/><ellipse cx="28.3" cy="168.2" rx="3.0" ry="1.3" transform="rotate(-49 28.3 168.2)" fill="#6cc27a"/><ellipse cx="23.6" cy="169.3" rx="3.0" ry="1.3" transform="rotate(-156 23.6 169.3)" fill="#6cc27a"/><ellipse cx="26.6" cy="160.7" rx="3.0" ry="1.3" transform="rotate(-49 26.6 160.7)" fill="#6cc27a"/><ellipse cx="21.9" cy="161.7" rx="3.0" ry="1.3" transform="rotate(-156 21.9 161.7)" fill="#6cc27a"/><ellipse cx="26.1" cy="153.4" rx="3.0" ry="1.3" transform="rotate(-40 26.1 153.4)" fill="#6cc27a"/><ellipse cx="21.3" cy="153.7" rx="3.0" ry="1.3" transform="rotate(-146 21.3 153.7)" fill="#6cc27a"/><ellipse cx="25.7" cy="145.8" rx="3.0" ry="1.3" transform="rotate(-40 25.7 145.8)" fill="#6cc27a"/><ellipse cx="20.9" cy="146.0" rx="3.0" ry="1.3" transform="rotate(-146 20.9 146.0)" fill="#6cc27a"/><ellipse cx="22.9" cy="137.0" rx="3.0" ry="1.3" transform="rotate(-93 22.9 137.0)" fill="#6cc27a"/><path d="M34.0 150.0 L40.0 160.0 L44.0 176.0" fill="none" stroke="#3e9a7c" stroke-width="0.9"/><ellipse cx="36.7" cy="158.4" rx="2.5" ry="1.1" transform="rotate(112 36.7 158.4)" fill="#58b48a"/><ellipse cx="40.1" cy="156.3" rx="2.5" ry="1.1" transform="rotate(6 40.1 156.3)" fill="#58b48a"/><ellipse cx="39.0" cy="164.3" rx="2.5" ry="1.1" transform="rotate(129 39.0 164.3)" fill="#58b48a"/><ellipse cx="42.9" cy="163.3" rx="2.5" ry="1.1" transform="rotate(23 42.9 163.3)" fill="#58b48a"/><ellipse cx="40.7" cy="171.1" rx="2.5" ry="1.1" transform="rotate(129 40.7 171.1)" fill="#58b48a"/><ellipse cx="44.6" cy="170.1" rx="2.5" ry="1.1" transform="rotate(23 44.6 170.1)" fill="#58b48a"/><ellipse cx="44.6" cy="178.4" rx="2.5" ry="1.1" transform="rotate(76 44.6 178.4)" fill="#58b48a"/><path d="M59 191 C48 196 34 208 26 222 C19 236 20 252 27 264 C34 276 52 282 64 290 C73 297 74 312 64 320 C54 328 36 328 28 320 C22 314 24 303 33 300 C42 297 50 304 56 313 C62 322 70 332 82 334 C92 336 100 330 108 326" fill="none" stroke="#3b9f8c" stroke-width="8"/><path d="M59 191 C48 196 34 208 26 222 C19 236 20 252 27 264 C34 276 52 282 64 290 C73 297 74 312 64 320 C54 328 36 328 28 320 C22 314 24 303 33 300 C42 297 50 304 56 313 C62 322 70 332 82 334 C92 336 100 330 108 326" fill="none" stroke="#62c49c" stroke-width="3" stroke-dasharray="1.5 1.5" opacity="0.85"/><path d="M46 188 L58 184 L64 188 L60 194 L50 197Z" fill="#3ba08c"/><path d="M58 190 L64 188" stroke="#c03030" stroke-width="1.5"/><path d="M63 188 L70 184 L73 186" fill="none" stroke="#d63a2c" stroke-width="0.9"/><path d="M32.0 240.0 L38.0 230.0 L44.0 222.0" fill="none" stroke="#3e9a7c" stroke-width="0.9"/><ellipse cx="37.8" cy="235.0" rx="3.0" ry="1.3" transform="rotate(-6 37.8 235.0)" fill="#6cc27a"/><ellipse cx="33.7" cy="232.6" rx="3.0" ry="1.3" transform="rotate(-112 33.7 232.6)" fill="#6cc27a"/><ellipse cx="40.6" cy="230.4" rx="3.0" ry="1.3" transform="rotate(-6 40.6 230.4)" fill="#6cc27a"/><ellipse cx="36.4" cy="227.9" rx="3.0" ry="1.3" transform="rotate(-112 36.4 227.9)" fill="#6cc27a"/><ellipse cx="43.8" cy="226.3" rx="3.0" ry="1.3" transform="rotate(0 43.8 226.3)" fill="#6cc27a"/><ellipse cx="39.9" cy="223.5" rx="3.0" ry="1.3" transform="rotate(-106 39.9 223.5)" fill="#6cc27a"/><ellipse cx="45.8" cy="219.6" rx="3.0" ry="1.3" transform="rotate(-53 45.8 219.6)" fill="#6cc27a"/><path d="M22.0 300.0 L20.0 280.0 L18.0 262.0 L22.0 250.0" fill="none" stroke="#3e9a7c" stroke-width="0.9"/><ellipse cx="23.2" cy="287.8" rx="3.0" ry="1.3" transform="rotate(-43 23.2 287.8)" fill="#6cc27a"/><ellipse cx="18.4" cy="288.3" rx="3.0" ry="1.3" transform="rotate(-149 18.4 288.3)" fill="#6cc27a"/><ellipse cx="22.2" cy="277.7" rx="3.0" ry="1.3" transform="rotate(-43 22.2 277.7)" fill="#6cc27a"/><ellipse cx="17.4" cy="278.2" rx="3.0" ry="1.3" transform="rotate(-149 17.4 278.2)" fill="#6cc27a"/><ellipse cx="21.0" cy="267.6" rx="3.0" ry="1.3" transform="rotate(-43 21.0 267.6)" fill="#6cc27a"/><ellipse cx="16.3" cy="268.1" rx="3.0" ry="1.3" transform="rotate(-149 16.3 268.1)" fill="#6cc27a"/><ellipse cx="21.6" cy="258.7" rx="3.0" ry="1.3" transform="rotate(-18 21.6 258.7)" fill="#6cc27a"/><ellipse cx="17.1" cy="257.2" rx="3.0" ry="1.3" transform="rotate(-125 17.1 257.2)" fill="#6cc27a"/><ellipse cx="22.9" cy="247.2" rx="3.0" ry="1.3" transform="rotate(-72 22.9 247.2)" fill="#6cc27a"/><path d="M50.0 298.0 L48.0 284.0 L44.0 270.0" fill="none" stroke="#3e9a7c" stroke-width="0.9"/><ellipse cx="50.8" cy="289.1" rx="2.5" ry="1.1" transform="rotate(-45 50.8 289.1)" fill="#58b48a"/><ellipse cx="46.8" cy="289.7" rx="2.5" ry="1.1" transform="rotate(-151 46.8 289.7)" fill="#58b48a"/><ellipse cx="49.5" cy="281.8" rx="2.5" ry="1.1" transform="rotate(-53 49.5 281.8)" fill="#58b48a"/><ellipse cx="45.6" cy="282.9" rx="2.5" ry="1.1" transform="rotate(-159 45.6 282.9)" fill="#58b48a"/><ellipse cx="47.5" cy="274.9" rx="2.5" ry="1.1" transform="rotate(-53 47.5 274.9)" fill="#58b48a"/><ellipse cx="43.6" cy="276.0" rx="2.5" ry="1.1" transform="rotate(-159 43.6 276.0)" fill="#58b48a"/><ellipse cx="43.3" cy="267.6" rx="2.5" ry="1.1" transform="rotate(-106 43.3 267.6)" fill="#58b48a"/><path d="M100.0 322.0 L88.0 312.0 L80.0 300.0 L78.0 290.0" fill="none" stroke="#3e9a7c" stroke-width="0.9"/><ellipse cx="92.4" cy="312.6" rx="3.0" ry="1.3" transform="rotate(-87 92.4 312.6)" fill="#58b48a"/><ellipse cx="89.4" cy="316.3" rx="3.0" ry="1.3" transform="rotate(167 89.4 316.3)" fill="#58b48a"/><ellipse cx="86.5" cy="305.4" rx="3.0" ry="1.3" transform="rotate(-71 86.5 305.4)" fill="#58b48a"/><ellipse cx="82.5" cy="308.1" rx="3.0" ry="1.3" transform="rotate(-177 82.5 308.1)" fill="#58b48a"/><ellipse cx="82.0" cy="297.6" rx="3.0" ry="1.3" transform="rotate(-48 82.0 297.6)" fill="#58b48a"/><ellipse cx="77.3" cy="298.6" rx="3.0" ry="1.3" transform="rotate(-154 77.3 298.6)" fill="#58b48a"/><ellipse cx="77.4" cy="287.1" rx="3.0" ry="1.3" transform="rotate(-101 77.4 287.1)" fill="#58b48a"/><path d="M28.0 210.0 L24.0 196.0 L27.0 180.0" fill="none" stroke="#3e9a7c" stroke-width="0.9"/><ellipse cx="27.4" cy="200.6" rx="2.5" ry="1.1" transform="rotate(-53 27.4 200.6)" fill="#58b48a"/><ellipse cx="23.5" cy="201.7" rx="2.5" ry="1.1" transform="rotate(-159 23.5 201.7)" fill="#58b48a"/><ellipse cx="26.4" cy="194.0" rx="2.5" ry="1.1" transform="rotate(-26 26.4 194.0)" fill="#58b48a"/><ellipse cx="22.5" cy="193.3" rx="2.5" ry="1.1" transform="rotate(-133 22.5 193.3)" fill="#58b48a"/><ellipse cx="27.8" cy="186.5" rx="2.5" ry="1.1" transform="rotate(-26 27.8 186.5)" fill="#58b48a"/><ellipse cx="23.9" cy="185.7" rx="2.5" ry="1.1" transform="rotate(-133 23.9 185.7)" fill="#58b48a"/><ellipse cx="27.5" cy="177.5" rx="2.5" ry="1.1" transform="rotate(-79 27.5 177.5)" fill="#58b48a"/><path d="M70 280 C80 276 90 280 92 288 C94 294 88 296 86 292" fill="none" stroke="#3e9a7c" stroke-width="1"/><circle cx="24" cy="254" r="1.3" fill="#e09080"/><circle cx="32" cy="246" r="1.3" fill="#e09080"/><circle cx="40" cy="272" r="1.3" fill="#e09080"/><circle cx="44" cy="290" r="1.3" fill="#e09080"/><circle cx="62" cy="276" r="1.3" fill="#e09080"/><circle cx="76" cy="286" r="1.3" fill="#e09080"/><path d="M21 318 L22 326 M27 330 L27 338 M40 328 L40 334" stroke="#3e9a7c" stroke-width="1"/><path d="M16 326 L21 323 L26 326 L24 333 L21 330 L18 333Z" fill="#d63a2c"/><path d="M21 338 L27 335 L33 338 L31 347 L27 343 L23 347Z" fill="#d63a2c"/><path d="M35 334 L40 331 L45 334 L43 342 L40 339 L37 342Z" fill="#d63a2c"/><path d="M54 346 C60 338 70 340 70 346 C70 352 62 350 64 346 M70 346 C80 350 90 344 96 348" fill="none" stroke="#3e9a7c" stroke-width="1.1"/><circle cx="12" cy="40" r="0.9" fill="#c9a9a0"/><circle cx="15" cy="100" r="0.9" fill="#c9a9a0"/><circle cx="92" cy="8" r="0.9" fill="#c9a9a0"/><circle cx="110" cy="14" r="0.9" fill="#c9a9a0"/><circle cx="112" cy="40" r="0.9" fill="#c9a9a0"/><circle cx="66" cy="215" r="0.9" fill="#c9a9a0"/><circle cx="45" cy="230" r="0.9" fill="#c9a9a0"/><circle cx="70" cy="255" r="0.9" fill="#c9a9a0"/><circle cx="112" cy="275" r="0.9" fill="#c9a9a0"/><circle cx="15" cy="205" r="0.9" fill="#c9a9a0"/><circle cx="80" cy="325" r="0.9" fill="#c9a9a0"/><circle cx="105" cy="340" r="0.9" fill="#c9a9a0"/><circle cx="100" cy="200" r="0.9" fill="#c9a9a0"/><circle cx="85" cy="245" r="0.9" fill="#c9a9a0"/><circle cx="14" cy="150" r="0.9" fill="#c9a9a0"/><circle cx="18" cy="275" r="0.9" fill="#c9a9a0"/><circle cx="36" cy="350" r="0.9" fill="#c9a9a0"/></g>
<g transform="translate(250 0) scale(-1 1)"><path d="M106.0 60.0 L80.0 42.0 L50.0 28.0 L24.0 12.0" fill="none" stroke="#3e9a7c" stroke-width="1.1"/><ellipse cx="99.8" cy="52.1" rx="3.8" ry="1.6" transform="rotate(-92 99.8 52.1)" fill="#6cc27a"/><ellipse cx="96.4" cy="57.0" rx="3.8" ry="1.6" transform="rotate(162 96.4 57.0)" fill="#6cc27a"/><ellipse cx="93.8" cy="47.9" rx="3.8" ry="1.6" transform="rotate(-92 93.8 47.9)" fill="#6cc27a"/><ellipse cx="90.4" cy="52.8" rx="3.8" ry="1.6" transform="rotate(162 90.4 52.8)" fill="#6cc27a"/><ellipse cx="87.8" cy="43.7" rx="3.8" ry="1.6" transform="rotate(-92 87.8 43.7)" fill="#6cc27a"/><ellipse cx="84.4" cy="48.7" rx="3.8" ry="1.6" transform="rotate(162 84.4 48.7)" fill="#6cc27a"/><ellipse cx="81.8" cy="39.6" rx="3.8" ry="1.6" transform="rotate(-92 81.8 39.6)" fill="#6cc27a"/><ellipse cx="78.3" cy="44.5" rx="3.8" ry="1.6" transform="rotate(162 78.3 44.5)" fill="#6cc27a"/><ellipse cx="74.7" cy="36.2" rx="3.8" ry="1.6" transform="rotate(-102 74.7 36.2)" fill="#6cc27a"/><ellipse cx="72.1" cy="41.6" rx="3.8" ry="1.6" transform="rotate(152 72.1 41.6)" fill="#6cc27a"/><ellipse cx="68.0" cy="33.1" rx="3.8" ry="1.6" transform="rotate(-102 68.0 33.1)" fill="#6cc27a"/><ellipse cx="65.5" cy="38.5" rx="3.8" ry="1.6" transform="rotate(152 65.5 38.5)" fill="#6cc27a"/><ellipse cx="61.4" cy="30.0" rx="3.8" ry="1.6" transform="rotate(-102 61.4 30.0)" fill="#6cc27a"/><ellipse cx="58.9" cy="35.4" rx="3.8" ry="1.6" transform="rotate(152 58.9 35.4)" fill="#6cc27a"/><ellipse cx="54.8" cy="26.9" rx="3.8" ry="1.6" transform="rotate(-102 54.8 26.9)" fill="#6cc27a"/><ellipse cx="52.2" cy="32.4" rx="3.8" ry="1.6" transform="rotate(152 52.2 32.4)" fill="#6cc27a"/><ellipse cx="48.6" cy="23.6" rx="3.8" ry="1.6" transform="rotate(-95 48.6 23.6)" fill="#6cc27a"/><ellipse cx="45.5" cy="28.7" rx="3.8" ry="1.6" transform="rotate(158 45.5 28.7)" fill="#6cc27a"/><ellipse cx="42.4" cy="19.8" rx="3.8" ry="1.6" transform="rotate(-95 42.4 19.8)" fill="#6cc27a"/><ellipse cx="39.2" cy="24.9" rx="3.8" ry="1.6" transform="rotate(158 39.2 24.9)" fill="#6cc27a"/><ellipse cx="36.1" cy="15.9" rx="3.8" ry="1.6" transform="rotate(-95 36.1 15.9)" fill="#6cc27a"/><ellipse cx="33.0" cy="21.1" rx="3.8" ry="1.6" transform="rotate(158 33.0 21.1)" fill="#6cc27a"/><ellipse cx="29.9" cy="12.1" rx="3.8" ry="1.6" transform="rotate(-95 29.9 12.1)" fill="#6cc27a"/><ellipse cx="26.8" cy="17.2" rx="3.8" ry="1.6" transform="rotate(158 26.8 17.2)" fill="#6cc27a"/><ellipse cx="20.8" cy="10.0" rx="3.8" ry="1.6" transform="rotate(-148 20.8 10.0)" fill="#6cc27a"/><path d="M104.0 60.0 L75.0 55.0 L50.0 54.0 L26.0 58.0" fill="none" stroke="#3e9a7c" stroke-width="1.1"/><ellipse cx="94.8" cy="55.8" rx="3.2" ry="1.4" transform="rotate(-117 94.8 55.8)" fill="#6cc27a"/><ellipse cx="93.9" cy="60.9" rx="3.2" ry="1.4" transform="rotate(137 93.9 60.9)" fill="#6cc27a"/><ellipse cx="87.0" cy="54.4" rx="3.2" ry="1.4" transform="rotate(-117 87.0 54.4)" fill="#6cc27a"/><ellipse cx="86.1" cy="59.6" rx="3.2" ry="1.4" transform="rotate(137 86.1 59.6)" fill="#6cc27a"/><ellipse cx="79.2" cy="53.1" rx="3.2" ry="1.4" transform="rotate(-117 79.2 53.1)" fill="#6cc27a"/><ellipse cx="78.3" cy="58.2" rx="3.2" ry="1.4" transform="rotate(137 78.3 58.2)" fill="#6cc27a"/><ellipse cx="71.1" cy="52.2" rx="3.2" ry="1.4" transform="rotate(-125 71.1 52.2)" fill="#6cc27a"/><ellipse cx="70.9" cy="57.4" rx="3.2" ry="1.4" transform="rotate(129 70.9 57.4)" fill="#6cc27a"/><ellipse cx="63.2" cy="51.9" rx="3.2" ry="1.4" transform="rotate(-125 63.2 51.9)" fill="#6cc27a"/><ellipse cx="63.0" cy="57.1" rx="3.2" ry="1.4" transform="rotate(129 63.0 57.1)" fill="#6cc27a"/><ellipse cx="55.3" cy="51.6" rx="3.2" ry="1.4" transform="rotate(-125 55.3 51.6)" fill="#6cc27a"/><ellipse cx="55.1" cy="56.8" rx="3.2" ry="1.4" transform="rotate(129 55.1 56.8)" fill="#6cc27a"/><ellipse cx="47.0" cy="51.9" rx="3.2" ry="1.4" transform="rotate(-136 47.0 51.9)" fill="#6cc27a"/><ellipse cx="47.8" cy="57.0" rx="3.2" ry="1.4" transform="rotate(117 47.8 57.0)" fill="#6cc27a"/><ellipse cx="39.2" cy="53.2" rx="3.2" ry="1.4" transform="rotate(-136 39.2 53.2)" fill="#6cc27a"/><ellipse cx="40.0" cy="58.3" rx="3.2" ry="1.4" transform="rotate(117 40.0 58.3)" fill="#6cc27a"/><ellipse cx="31.4" cy="54.5" rx="3.2" ry="1.4" transform="rotate(-136 31.4 54.5)" fill="#6cc27a"/><ellipse cx="32.3" cy="59.6" rx="3.2" ry="1.4" transform="rotate(117 32.3 59.6)" fill="#6cc27a"/><ellipse cx="22.8" cy="58.5" rx="3.2" ry="1.4" transform="rotate(171 22.8 58.5)" fill="#6cc27a"/><path d="M100.0 57.0 L88.0 36.0 L76.0 15.0" fill="none" stroke="#3e9a7c" stroke-width="0.9"/><ellipse cx="96.2" cy="46.3" rx="2.5" ry="1.1" transform="rotate(-67 96.2 46.3)" fill="#58b48a"/><ellipse cx="92.7" cy="48.3" rx="2.5" ry="1.1" transform="rotate(-173 92.7 48.3)" fill="#58b48a"/><ellipse cx="91.4" cy="37.9" rx="2.5" ry="1.1" transform="rotate(-67 91.4 37.9)" fill="#58b48a"/><ellipse cx="87.9" cy="39.9" rx="2.5" ry="1.1" transform="rotate(-173 87.9 39.9)" fill="#58b48a"/><ellipse cx="86.6" cy="29.5" rx="2.5" ry="1.1" transform="rotate(-67 86.6 29.5)" fill="#58b48a"/><ellipse cx="83.1" cy="31.5" rx="2.5" ry="1.1" transform="rotate(-173 83.1 31.5)" fill="#58b48a"/><ellipse cx="81.8" cy="21.1" rx="2.5" ry="1.1" transform="rotate(-67 81.8 21.1)" fill="#58b48a"/><ellipse cx="78.3" cy="23.1" rx="2.5" ry="1.1" transform="rotate(-173 78.3 23.1)" fill="#58b48a"/><ellipse cx="74.8" cy="12.8" rx="2.5" ry="1.1" transform="rotate(-120 74.8 12.8)" fill="#58b48a"/><path d="M106 58 C100 40 92 28 90 18 C88 10 95 6 98 11 C100 14 97 17 95 15" fill="none" stroke="#4fb39b" stroke-width="1.6"/><path d="M96.0 66.0 L80.0 70.0 L66.0 74.0" fill="none" stroke="#3e9a7c" stroke-width="0.9"/><ellipse cx="86.5" cy="66.3" rx="2.5" ry="1.1" transform="rotate(-141 86.5 66.3)" fill="#58b48a"/><ellipse cx="87.5" cy="70.2" rx="2.5" ry="1.1" transform="rotate(113 87.5 70.2)" fill="#58b48a"/><ellipse cx="79.0" cy="68.2" rx="2.5" ry="1.1" transform="rotate(-141 79.0 68.2)" fill="#58b48a"/><ellipse cx="80.0" cy="72.1" rx="2.5" ry="1.1" transform="rotate(113 80.0 72.1)" fill="#58b48a"/><ellipse cx="71.5" cy="70.4" rx="2.5" ry="1.1" transform="rotate(-143 71.5 70.4)" fill="#58b48a"/><ellipse cx="72.6" cy="74.2" rx="2.5" ry="1.1" transform="rotate(111 72.6 74.2)" fill="#58b48a"/><ellipse cx="63.6" cy="74.7" rx="2.5" ry="1.1" transform="rotate(164 63.6 74.7)" fill="#58b48a"/><path d="M110.0 60.0 L100.0 68.0 L86.0 74.0" fill="none" stroke="#3e9a7c" stroke-width="0.9"/><ellipse cx="102.1" cy="63.8" rx="2.5" ry="1.1" transform="rotate(-166 102.1 63.8)" fill="#58b48a"/><ellipse cx="104.6" cy="66.9" rx="2.5" ry="1.1" transform="rotate(88 104.6 66.9)" fill="#58b48a"/><ellipse cx="96.7" cy="67.2" rx="2.5" ry="1.1" transform="rotate(-150 96.7 67.2)" fill="#58b48a"/><ellipse cx="98.3" cy="70.9" rx="2.5" ry="1.1" transform="rotate(104 98.3 70.9)" fill="#58b48a"/><ellipse cx="90.3" cy="70.0" rx="2.5" ry="1.1" transform="rotate(-150 90.3 70.0)" fill="#58b48a"/><ellipse cx="91.9" cy="73.7" rx="2.5" ry="1.1" transform="rotate(104 91.9 73.7)" fill="#58b48a"/><ellipse cx="83.7" cy="75.0" rx="2.5" ry="1.1" transform="rotate(157 83.7 75.0)" fill="#58b48a"/><path d="M96 66 C86 76 74 74 72 68 C71 64 76 63 77 66" fill="none" stroke="#3e9a7c" stroke-width="1"/><circle cx="30" cy="26" r="1.4" fill="#eadca0"/><circle cx="44" cy="34" r="1.4" fill="#eadca0"/><circle cx="58" cy="26" r="1.4" fill="#eadca0"/><circle cx="70" cy="36" r="1.4" fill="#eadca0"/><circle cx="84" cy="26" r="1.4" fill="#eadca0"/><circle cx="92" cy="44" r="1.4" fill="#eadca0"/><circle cx="66" cy="50" r="1.4" fill="#eadca0"/><circle cx="56" cy="58" r="1.4" fill="#eadca0"/><circle cx="80" cy="18" r="1.4" fill="#eadca0"/><circle cx="96" cy="28" r="1.4" fill="#eadca0"/><circle cx="76" cy="14" r="1.4" fill="#eadca0"/><circle cx="88" cy="40" r="1.4" fill="#eadca0"/><circle cx="62" cy="42" r="1.4" fill="#eadca0"/><circle cx="38" cy="46" r="1.4" fill="#eadca0"/><circle cx="50" cy="20" r="1.4" fill="#eadca0"/><ellipse cx="28.6" cy="69" rx="4.6" ry="6.5" fill="#e9cf86"/><ellipse cx="43" cy="63.5" rx="4" ry="5.6" fill="#e9cf86"/><circle cx="48" cy="13.4" r="6" fill="#d63a2c"/><circle cx="48" cy="13.4" r="2" fill="#8a2020"/><path d="M35.0 1.9 L35.7 4.7 L38.5 5.4 L35.7 6.1 L35.0 8.9 L34.3 6.1 L31.5 5.4 L34.3 4.7Z" fill="#f3eed8"/><path d="M20.6 84.2 L21.3 87.0 L24.1 87.7 L21.3 88.4 L20.6 91.2 L19.9 88.4 L17.1 87.7 L19.9 87.0Z" fill="#f3eed8"/><path d="M36 82 C40 78 48 80 50 86 C52 90 56 92 58 96 L54 98 C50 96 46 94 42 92 C38 90 35 86 36 82Z" fill="#2f7fa3"/><ellipse cx="52" cy="92" rx="4" ry="5" fill="#3592b0"/><path d="M72 92 L82 88 L86 96 L84 106 L74 108 L70 100Z" fill="#3aa2c4"/><path d="M76 90 L80 106" stroke="#2a7f9a" stroke-width="0.8"/><rect x="79" y="84" width="5" height="5" fill="#a8dbe8"/><path d="M56 80 C60 74 70 74 78 84" fill="none" stroke="#8aa0b0" stroke-width="0.8"/><path d="M90 96 C96 92 102 98 96 104 C92 108 98 112 104 108" fill="none" stroke="#7a6a90" stroke-width="1"/><path d="M119 66.5 L139 56 L141.5 60 L121.5 71Z" fill="#3aa0b8"/><path d="M108.5 70 L121 65.5 L124 73 L121 80.5 L111.5 80.5Z" fill="#3d9fb8"/><path d="M110.5 78 C106 82 102.5 88 101.5 96.5 L111 97 C110.5 90 112.5 85 116.5 80Z" fill="#5cc6d8"/><circle cx="116" cy="81" r="2" fill="none" stroke="#3d9fb8" stroke-width="1"/><circle cx="41" cy="105.5" r="7.5" fill="#d63a2c"/><circle cx="41" cy="105.5" r="4" fill="#c02a22"/><circle cx="41" cy="105.5" r="1.6" fill="#7a1a1a"/><path d="M30.0 125.0 L50.0 128.0 L70.0 122.0 L86.0 114.0" fill="none" stroke="#3e9a7c" stroke-width="1.1"/><ellipse cx="37.4" cy="128.7" rx="3.2" ry="1.4" transform="rotate(62 37.4 128.7)" fill="#6cc27a"/><ellipse cx="38.1" cy="123.6" rx="3.2" ry="1.4" transform="rotate(-45 38.1 123.6)" fill="#6cc27a"/><ellipse cx="43.2" cy="129.6" rx="3.2" ry="1.4" transform="rotate(62 43.2 129.6)" fill="#6cc27a"/><ellipse cx="44.0" cy="124.5" rx="3.2" ry="1.4" transform="rotate(-45 44.0 124.5)" fill="#6cc27a"/><ellipse cx="49.0" cy="130.5" rx="3.2" ry="1.4" transform="rotate(62 49.0 130.5)" fill="#6cc27a"/><ellipse cx="49.8" cy="125.3" rx="3.2" ry="1.4" transform="rotate(-45 49.8 125.3)" fill="#6cc27a"/><ellipse cx="55.8" cy="129.0" rx="3.2" ry="1.4" transform="rotate(36 55.8 129.0)" fill="#6cc27a"/><ellipse cx="54.4" cy="124.0" rx="3.2" ry="1.4" transform="rotate(-70 54.4 124.0)" fill="#6cc27a"/><ellipse cx="61.5" cy="127.3" rx="3.2" ry="1.4" transform="rotate(36 61.5 127.3)" fill="#6cc27a"/><ellipse cx="60.0" cy="122.3" rx="3.2" ry="1.4" transform="rotate(-70 60.0 122.3)" fill="#6cc27a"/><ellipse cx="67.1" cy="125.6" rx="3.2" ry="1.4" transform="rotate(36 67.1 125.6)" fill="#6cc27a"/><ellipse cx="65.7" cy="120.6" rx="3.2" ry="1.4" transform="rotate(-70 65.7 120.6)" fill="#6cc27a"/><ellipse cx="73.1" cy="123.4" rx="3.2" ry="1.4" transform="rotate(27 73.1 123.4)" fill="#6cc27a"/><ellipse cx="70.8" cy="118.7" rx="3.2" ry="1.4" transform="rotate(-80 70.8 118.7)" fill="#6cc27a"/><ellipse cx="78.4" cy="120.7" rx="3.2" ry="1.4" transform="rotate(27 78.4 120.7)" fill="#6cc27a"/><ellipse cx="76.0" cy="116.1" rx="3.2" ry="1.4" transform="rotate(-80 76.0 116.1)" fill="#6cc27a"/><ellipse cx="83.6" cy="118.1" rx="3.2" ry="1.4" transform="rotate(27 83.6 118.1)" fill="#6cc27a"/><ellipse cx="81.3" cy="113.4" rx="3.2" ry="1.4" transform="rotate(-80 81.3 113.4)" fill="#6cc27a"/><ellipse cx="88.9" cy="112.5" rx="3.2" ry="1.4" transform="rotate(-27 88.9 112.5)" fill="#6cc27a"/><path d="M46.0 130.0 L56.0 140.0 L68.0 146.0 L88.0 140.0" fill="none" stroke="#3e9a7c" stroke-width="0.9"/><ellipse cx="52.4" cy="139.8" rx="3.0" ry="1.3" transform="rotate(98 52.4 139.8)" fill="#58b48a"/><ellipse cx="55.8" cy="136.4" rx="3.0" ry="1.3" transform="rotate(-8 55.8 136.4)" fill="#58b48a"/><ellipse cx="61.2" cy="145.3" rx="3.0" ry="1.3" transform="rotate(80 61.2 145.3)" fill="#58b48a"/><ellipse cx="63.4" cy="141.0" rx="3.0" ry="1.3" transform="rotate(-27 63.4 141.0)" fill="#58b48a"/><ellipse cx="71.9" cy="147.3" rx="3.0" ry="1.3" transform="rotate(36 71.9 147.3)" fill="#58b48a"/><ellipse cx="70.5" cy="142.8" rx="3.0" ry="1.3" transform="rotate(-70 70.5 142.8)" fill="#58b48a"/><ellipse cx="81.1" cy="144.6" rx="3.0" ry="1.3" transform="rotate(36 81.1 144.6)" fill="#58b48a"/><ellipse cx="79.8" cy="140.0" rx="3.0" ry="1.3" transform="rotate(-70 79.8 140.0)" fill="#58b48a"/><ellipse cx="90.9" cy="139.1" rx="3.0" ry="1.3" transform="rotate(-17 90.9 139.1)" fill="#58b48a"/><path d="M44.0 112.0 L48.0 126.0 L52.0 140.0" fill="none" stroke="#3e9a7c" stroke-width="0.9"/><ellipse cx="44.2" cy="121.4" rx="3.0" ry="1.3" transform="rotate(127 44.2 121.4)" fill="#6cc27a"/><ellipse cx="48.8" cy="120.1" rx="3.0" ry="1.3" transform="rotate(21 48.8 120.1)" fill="#6cc27a"/><ellipse cx="46.2" cy="128.4" rx="3.0" ry="1.3" transform="rotate(127 46.2 128.4)" fill="#6cc27a"/><ellipse cx="50.8" cy="127.1" rx="3.0" ry="1.3" transform="rotate(21 50.8 127.1)" fill="#6cc27a"/><ellipse cx="48.2" cy="135.4" rx="3.0" ry="1.3" transform="rotate(127 48.2 135.4)" fill="#6cc27a"/><ellipse cx="52.8" cy="134.1" rx="3.0" ry="1.3" transform="rotate(21 52.8 134.1)" fill="#6cc27a"/><ellipse cx="52.8" cy="142.9" rx="3.0" ry="1.3" transform="rotate(74 52.8 142.9)" fill="#6cc27a"/><circle cx="90" cy="120" r="5.5" fill="#e87a3c"/><circle cx="70" cy="133" r="4.6" fill="#e87a3c"/><circle cx="81.4" cy="131.5" r="5.5" fill="#e87a3c"/><circle cx="66" cy="112" r="2.5" fill="#d63a2c"/><circle cx="20" cy="130.6" r="2.8" fill="#e07868"/><path d="M27 123 L53 162" stroke="#e9ddb2" stroke-width="2.6" stroke-linecap="round"/><path d="M53 162 L59 171" stroke="#2f6d7c" stroke-width="2.8" stroke-linecap="round"/><path d="M28.0 178.0 L24.0 160.0 L23.0 140.0" fill="none" stroke="#3e9a7c" stroke-width="0.9"/><ellipse cx="28.3" cy="168.2" rx="3.0" ry="1.3" transform="rotate(-49 28.3 168.2)" fill="#6cc27a"/><ellipse cx="23.6" cy="169.3" rx="3.0" ry="1.3" transform="rotate(-156 23.6 169.3)" fill="#6cc27a"/><ellipse cx="26.6" cy="160.7" rx="3.0" ry="1.3" transform="rotate(-49 26.6 160.7)" fill="#6cc27a"/><ellipse cx="21.9" cy="161.7" rx="3.0" ry="1.3" transform="rotate(-156 21.9 161.7)" fill="#6cc27a"/><ellipse cx="26.1" cy="153.4" rx="3.0" ry="1.3" transform="rotate(-40 26.1 153.4)" fill="#6cc27a"/><ellipse cx="21.3" cy="153.7" rx="3.0" ry="1.3" transform="rotate(-146 21.3 153.7)" fill="#6cc27a"/><ellipse cx="25.7" cy="145.8" rx="3.0" ry="1.3" transform="rotate(-40 25.7 145.8)" fill="#6cc27a"/><ellipse cx="20.9" cy="146.0" rx="3.0" ry="1.3" transform="rotate(-146 20.9 146.0)" fill="#6cc27a"/><ellipse cx="22.9" cy="137.0" rx="3.0" ry="1.3" transform="rotate(-93 22.9 137.0)" fill="#6cc27a"/><path d="M34.0 150.0 L40.0 160.0 L44.0 176.0" fill="none" stroke="#3e9a7c" stroke-width="0.9"/><ellipse cx="36.7" cy="158.4" rx="2.5" ry="1.1" transform="rotate(112 36.7 158.4)" fill="#58b48a"/><ellipse cx="40.1" cy="156.3" rx="2.5" ry="1.1" transform="rotate(6 40.1 156.3)" fill="#58b48a"/><ellipse cx="39.0" cy="164.3" rx="2.5" ry="1.1" transform="rotate(129 39.0 164.3)" fill="#58b48a"/><ellipse cx="42.9" cy="163.3" rx="2.5" ry="1.1" transform="rotate(23 42.9 163.3)" fill="#58b48a"/><ellipse cx="40.7" cy="171.1" rx="2.5" ry="1.1" transform="rotate(129 40.7 171.1)" fill="#58b48a"/><ellipse cx="44.6" cy="170.1" rx="2.5" ry="1.1" transform="rotate(23 44.6 170.1)" fill="#58b48a"/><ellipse cx="44.6" cy="178.4" rx="2.5" ry="1.1" transform="rotate(76 44.6 178.4)" fill="#58b48a"/><path d="M59 191 C48 196 34 208 26 222 C19 236 20 252 27 264 C34 276 52 282 64 290 C73 297 74 312 64 320 C54 328 36 328 28 320 C22 314 24 303 33 300 C42 297 50 304 56 313 C62 322 70 332 82 334 C92 336 100 330 108 326" fill="none" stroke="#3b9f8c" stroke-width="8"/><path d="M59 191 C48 196 34 208 26 222 C19 236 20 252 27 264 C34 276 52 282 64 290 C73 297 74 312 64 320 C54 328 36 328 28 320 C22 314 24 303 33 300 C42 297 50 304 56 313 C62 322 70 332 82 334 C92 336 100 330 108 326" fill="none" stroke="#62c49c" stroke-width="3" stroke-dasharray="1.5 1.5" opacity="0.85"/><path d="M46 188 L58 184 L64 188 L60 194 L50 197Z" fill="#3ba08c"/><path d="M58 190 L64 188" stroke="#c03030" stroke-width="1.5"/><path d="M63 188 L70 184 L73 186" fill="none" stroke="#d63a2c" stroke-width="0.9"/><path d="M32.0 240.0 L38.0 230.0 L44.0 222.0" fill="none" stroke="#3e9a7c" stroke-width="0.9"/><ellipse cx="37.8" cy="235.0" rx="3.0" ry="1.3" transform="rotate(-6 37.8 235.0)" fill="#6cc27a"/><ellipse cx="33.7" cy="232.6" rx="3.0" ry="1.3" transform="rotate(-112 33.7 232.6)" fill="#6cc27a"/><ellipse cx="40.6" cy="230.4" rx="3.0" ry="1.3" transform="rotate(-6 40.6 230.4)" fill="#6cc27a"/><ellipse cx="36.4" cy="227.9" rx="3.0" ry="1.3" transform="rotate(-112 36.4 227.9)" fill="#6cc27a"/><ellipse cx="43.8" cy="226.3" rx="3.0" ry="1.3" transform="rotate(0 43.8 226.3)" fill="#6cc27a"/><ellipse cx="39.9" cy="223.5" rx="3.0" ry="1.3" transform="rotate(-106 39.9 223.5)" fill="#6cc27a"/><ellipse cx="45.8" cy="219.6" rx="3.0" ry="1.3" transform="rotate(-53 45.8 219.6)" fill="#6cc27a"/><path d="M22.0 300.0 L20.0 280.0 L18.0 262.0 L22.0 250.0" fill="none" stroke="#3e9a7c" stroke-width="0.9"/><ellipse cx="23.2" cy="287.8" rx="3.0" ry="1.3" transform="rotate(-43 23.2 287.8)" fill="#6cc27a"/><ellipse cx="18.4" cy="288.3" rx="3.0" ry="1.3" transform="rotate(-149 18.4 288.3)" fill="#6cc27a"/><ellipse cx="22.2" cy="277.7" rx="3.0" ry="1.3" transform="rotate(-43 22.2 277.7)" fill="#6cc27a"/><ellipse cx="17.4" cy="278.2" rx="3.0" ry="1.3" transform="rotate(-149 17.4 278.2)" fill="#6cc27a"/><ellipse cx="21.0" cy="267.6" rx="3.0" ry="1.3" transform="rotate(-43 21.0 267.6)" fill="#6cc27a"/><ellipse cx="16.3" cy="268.1" rx="3.0" ry="1.3" transform="rotate(-149 16.3 268.1)" fill="#6cc27a"/><ellipse cx="21.6" cy="258.7" rx="3.0" ry="1.3" transform="rotate(-18 21.6 258.7)" fill="#6cc27a"/><ellipse cx="17.1" cy="257.2" rx="3.0" ry="1.3" transform="rotate(-125 17.1 257.2)" fill="#6cc27a"/><ellipse cx="22.9" cy="247.2" rx="3.0" ry="1.3" transform="rotate(-72 22.9 247.2)" fill="#6cc27a"/><path d="M50.0 298.0 L48.0 284.0 L44.0 270.0" fill="none" stroke="#3e9a7c" stroke-width="0.9"/><ellipse cx="50.8" cy="289.1" rx="2.5" ry="1.1" transform="rotate(-45 50.8 289.1)" fill="#58b48a"/><ellipse cx="46.8" cy="289.7" rx="2.5" ry="1.1" transform="rotate(-151 46.8 289.7)" fill="#58b48a"/><ellipse cx="49.5" cy="281.8" rx="2.5" ry="1.1" transform="rotate(-53 49.5 281.8)" fill="#58b48a"/><ellipse cx="45.6" cy="282.9" rx="2.5" ry="1.1" transform="rotate(-159 45.6 282.9)" fill="#58b48a"/><ellipse cx="47.5" cy="274.9" rx="2.5" ry="1.1" transform="rotate(-53 47.5 274.9)" fill="#58b48a"/><ellipse cx="43.6" cy="276.0" rx="2.5" ry="1.1" transform="rotate(-159 43.6 276.0)" fill="#58b48a"/><ellipse cx="43.3" cy="267.6" rx="2.5" ry="1.1" transform="rotate(-106 43.3 267.6)" fill="#58b48a"/><path d="M100.0 322.0 L88.0 312.0 L80.0 300.0 L78.0 290.0" fill="none" stroke="#3e9a7c" stroke-width="0.9"/><ellipse cx="92.4" cy="312.6" rx="3.0" ry="1.3" transform="rotate(-87 92.4 312.6)" fill="#58b48a"/><ellipse cx="89.4" cy="316.3" rx="3.0" ry="1.3" transform="rotate(167 89.4 316.3)" fill="#58b48a"/><ellipse cx="86.5" cy="305.4" rx="3.0" ry="1.3" transform="rotate(-71 86.5 305.4)" fill="#58b48a"/><ellipse cx="82.5" cy="308.1" rx="3.0" ry="1.3" transform="rotate(-177 82.5 308.1)" fill="#58b48a"/><ellipse cx="82.0" cy="297.6" rx="3.0" ry="1.3" transform="rotate(-48 82.0 297.6)" fill="#58b48a"/><ellipse cx="77.3" cy="298.6" rx="3.0" ry="1.3" transform="rotate(-154 77.3 298.6)" fill="#58b48a"/><ellipse cx="77.4" cy="287.1" rx="3.0" ry="1.3" transform="rotate(-101 77.4 287.1)" fill="#58b48a"/><path d="M28.0 210.0 L24.0 196.0 L27.0 180.0" fill="none" stroke="#3e9a7c" stroke-width="0.9"/><ellipse cx="27.4" cy="200.6" rx="2.5" ry="1.1" transform="rotate(-53 27.4 200.6)" fill="#58b48a"/><ellipse cx="23.5" cy="201.7" rx="2.5" ry="1.1" transform="rotate(-159 23.5 201.7)" fill="#58b48a"/><ellipse cx="26.4" cy="194.0" rx="2.5" ry="1.1" transform="rotate(-26 26.4 194.0)" fill="#58b48a"/><ellipse cx="22.5" cy="193.3" rx="2.5" ry="1.1" transform="rotate(-133 22.5 193.3)" fill="#58b48a"/><ellipse cx="27.8" cy="186.5" rx="2.5" ry="1.1" transform="rotate(-26 27.8 186.5)" fill="#58b48a"/><ellipse cx="23.9" cy="185.7" rx="2.5" ry="1.1" transform="rotate(-133 23.9 185.7)" fill="#58b48a"/><ellipse cx="27.5" cy="177.5" rx="2.5" ry="1.1" transform="rotate(-79 27.5 177.5)" fill="#58b48a"/><path d="M70 280 C80 276 90 280 92 288 C94 294 88 296 86 292" fill="none" stroke="#3e9a7c" stroke-width="1"/><circle cx="24" cy="254" r="1.3" fill="#e09080"/><circle cx="32" cy="246" r="1.3" fill="#e09080"/><circle cx="40" cy="272" r="1.3" fill="#e09080"/><circle cx="44" cy="290" r="1.3" fill="#e09080"/><circle cx="62" cy="276" r="1.3" fill="#e09080"/><circle cx="76" cy="286" r="1.3" fill="#e09080"/><path d="M21 318 L22 326 M27 330 L27 338 M40 328 L40 334" stroke="#3e9a7c" stroke-width="1"/><path d="M16 326 L21 323 L26 326 L24 333 L21 330 L18 333Z" fill="#d63a2c"/><path d="M21 338 L27 335 L33 338 L31 347 L27 343 L23 347Z" fill="#d63a2c"/><path d="M35 334 L40 331 L45 334 L43 342 L40 339 L37 342Z" fill="#d63a2c"/><path d="M54 346 C60 338 70 340 70 346 C70 352 62 350 64 346 M70 346 C80 350 90 344 96 348" fill="none" stroke="#3e9a7c" stroke-width="1.1"/><circle cx="12" cy="40" r="0.9" fill="#c9a9a0"/><circle cx="15" cy="100" r="0.9" fill="#c9a9a0"/><circle cx="92" cy="8" r="0.9" fill="#c9a9a0"/><circle cx="110" cy="14" r="0.9" fill="#c9a9a0"/><circle cx="112" cy="40" r="0.9" fill="#c9a9a0"/><circle cx="66" cy="215" r="0.9" fill="#c9a9a0"/><circle cx="45" cy="230" r="0.9" fill="#c9a9a0"/><circle cx="70" cy="255" r="0.9" fill="#c9a9a0"/><circle cx="112" cy="275" r="0.9" fill="#c9a9a0"/><circle cx="15" cy="205" r="0.9" fill="#c9a9a0"/><circle cx="80" cy="325" r="0.9" fill="#c9a9a0"/><circle cx="105" cy="340" r="0.9" fill="#c9a9a0"/><circle cx="100" cy="200" r="0.9" fill="#c9a9a0"/><circle cx="85" cy="245" r="0.9" fill="#c9a9a0"/><circle cx="14" cy="150" r="0.9" fill="#c9a9a0"/><circle cx="18" cy="275" r="0.9" fill="#c9a9a0"/><circle cx="36" cy="350" r="0.9" fill="#c9a9a0"/></g>
<path d="M123.4 27.6 L124.5 34.8 L130.5 30.5 L126.2 36.5 L133.4 37.6 L126.2 38.7 L130.5 44.7 L124.5 40.4 L123.4 47.6 L122.3 40.4 L116.3 44.7 L120.6 38.7 L113.4 37.6 L120.6 36.5 L116.3 30.5 L122.3 34.8Z" fill="#e23a2b"/>
<path d="M124.0 106.5 L125.3 110.7 L129.5 112.0 L125.3 113.3 L124.0 117.5 L122.7 113.3 L118.5 112.0 L122.7 110.7Z" fill="#f3eed8"/>
<path d="M109.0 114.8 L109.7 117.3 L112.2 118.0 L109.7 118.7 L109.0 121.2 L108.3 118.7 L105.8 118.0 L108.3 117.3Z" fill="#e8c860"/>
<path d="M139.0 114.8 L139.7 117.3 L142.2 118.0 L139.7 118.7 L139.0 121.2 L138.3 118.7 L135.8 118.0 L138.3 117.3Z" fill="#e8c860"/>
<g font-family="Liberation Serif" fill="#c9c4d6" text-anchor="middle" font-size="10.5">
<text x="124" y="135">Autorka</text><text x="124" y="148.5">bestsellerowej</text><text x="124" y="162">powieści</text><text x="124" y="175.5" font-style="italic">Miniaturzystka</text></g>
<ellipse cx="124" cy="193" rx="3.5" ry="5" fill="none" stroke="#8fd0e0" stroke-width="1.4"/><path d="M124 190 V196" stroke="#8fd0e0" stroke-width="1.3"/>
<text x="125.5" y="243.5" font-family="Liberation Serif" font-size="46" fill="#d9473a" text-anchor="middle" letter-spacing="5">MUZA</text>
<text font-family="Liberation Serif" font-size="17" fill="#8fd3e2" letter-spacing="2.2"><textPath href="#arc" startOffset="50%" text-anchor="middle">JESSIE BURTON</textPath></text>
<path d="M124.8 279.0 L125.4 282.6 L128.3 280.5 L126.2 283.4 L129.8 284.0 L126.2 284.6 L128.3 287.5 L125.4 285.4 L124.8 289.0 L124.2 285.4 L121.3 287.5 L123.4 284.6 L119.8 284.0 L123.4 283.4 L121.3 280.5 L124.2 282.6Z" fill="#eac860"/>
<rect x="101" y="304" width="48" height="33" rx="2" fill="#e04a32"/>
<rect x="97" y="307" width="56" height="6" rx="2" fill="#d9402a"/>
<rect x="112" y="294" width="26" height="13" fill="#f3ecd6"/>
<path d="M110 316 C118 310 132 310 140 316 L136 322 L114 322Z" fill="#c88a70"/>
<path d="M104 326 H146 M104 330 H146" stroke="#f0b0a0" stroke-width="1" stroke-dasharray="2 1.5"/>
</svg>
<div style="left:1014px;top:409px;width:61px;height:17px;background:#000"></div>
<div class="t" style="left:1017px;top:409.50px;font-size:13px;line-height:16px;color:#fff;font-weight:bold;letter-spacing:-0.15px">352 x 500</div>
<div class="btn" style="left:781px;top:433px;width:109px;height:21px;"><svg width="18" height="18" viewBox="0 0 18 18" style="position:absolute;left:4px;top:0px"><rect x="3" y="2" width="12" height="7" fill="#e8a23a"/><rect x="1" y="7" width="16" height="9" fill="#f5c24a"/></svg><span class="bt" style="left:23px;line-height:19px;font-size:11px;"><u>B</u>rowse</span></div>
<div class="btn" style="left:897px;top:433px;width:109px;height:21px;"><svg width="14" height="18" viewBox="0 0 14 18" style="position:absolute;left:4px;top:1px"><rect x="0.2" y="2.2" width="11" height="1.8" fill="#e0312f"/><rect x="3.4" y="0.6" width="4.6" height="2" fill="#e0312f"/><path d="M0.8 4.8 H10.6 V16.6 H0.8Z" fill="#e0312f"/><path d="M3.3 6.3 V15.2 M5.7 6.3 V15.2 M8.1 6.3 V15.2" stroke="#f4c4c4" stroke-width="1"/></svg><span class="bt" style="left:19px;line-height:19px;font-size:11px;"><u>R</u>emove</span></div>
<div class="btn" style="left:1014px;top:433px;width:109px;height:21px;"><svg width="18" height="18" viewBox="0 0 18 18" style="position:absolute;left:5px;top:1px"><circle cx="9" cy="9" r="7" fill="#e6e6e6"/><path d="M6.8 5.5 H5.3 V12.5 H6.8 M11.2 5.5 H12.7 V12.5 H11.2" fill="none" stroke="#e89a3c" stroke-width="1.3"/></svg><span class="bt" style="left:23px;line-height:19px;font-size:11px;">T<u>r</u>im borders</span><svg width="6" height="4" viewBox="0 0 6 4" style="position:absolute;right:2px;bottom:1px"><path d="M0 0.5 L6 0.5 L3 3.5Z" fill="#111"/></svg></div>
<div class="btn" style="left:781px;top:461px;width:168px;height:20px;"><svg width="18" height="18" viewBox="0 0 18 18" style="position:absolute;left:4px;top:1px"><circle cx="8" cy="8" r="8" fill="#2b8ad6"/><path d="M8 3 V12 M4.2 8.3 L8 12 L11.8 8.3" fill="none" stroke="#fff" stroke-width="2"/></svg><span class="bt" style="left:22px;line-height:18px;font-size:11px;">Download co<u>v</u>er</span></div>
<div class="btn" style="left:956px;top:461px;width:167px;height:20px;"><svg width="18" height="18" viewBox="0 0 18 18" style="position:absolute;left:4px;top:0px"><circle cx="8.5" cy="8.5" r="8" fill="#a8a8a8"/><circle cx="8.5" cy="8.5" r="6.2" fill="#d0d0d0"/><rect x="5.5" y="4.5" width="6" height="8" fill="#fff"/></svg><span class="bt" style="left:24px;line-height:18px;font-size:11px;"><u>G</u>enerate cover</span><svg width="6" height="4" viewBox="0 0 6 4" style="position:absolute;right:2px;bottom:1px"><path d="M0 0.5 L6 0.5 L3 3.5Z" fill="#111"/></svg></div>
<div style="left:33px;top:521px;width:1088px;height:390px;background:#fff;border:1px solid #a0a0a0;border-bottom:1px solid #a0a0a0"></div>
<svg width="1158" height="995" style="left:0;top:0"><path d="M41.5 535 L50 528.3 L50 541.5Z" fill="#d6521f"/><path d="M49 535 C56 535 57.5 537 57.5 540 C57.5 543 55.5 545 53 545.8" fill="none" stroke="#d6521f" stroke-width="4.6"/><path d="M82.8 535 L74.3 528.3 L74.3 541.5Z" fill="#9a9a9a"/><path d="M75.3 535 C68.3 535 66.8 537 66.8 540 C66.8 543 68.8 545 71.3 545.8" fill="none" stroke="#9a9a9a" stroke-width="4.6"/><rect x="89.7" y="528.3" width="18.3" height="3.2" fill="#a86464"/><rect x="89.7" y="530.3" width="18.3" height="1.2" fill="#d8b4b4"/><rect x="89.7" y="532.9" width="18.3" height="3.2" fill="#a86464"/><rect x="89.7" y="534.9" width="18.3" height="1.2" fill="#d8b4b4"/><rect x="89.7" y="537.5" width="18.3" height="3.2" fill="#a86464"/><rect x="89.7" y="539.5" width="18.3" height="1.2" fill="#d8b4b4"/><rect x="89.7" y="542.1" width="18.3" height="3.2" fill="#a86464"/><rect x="89.7" y="544.1" width="18.3" height="1.2" fill="#d8b4b4"/><rect x="103.5" y="538" width="5" height="8" fill="#fff"/><path d="M104 538.5 H108 M106 538.5 V545.5 M104 545.5 H108" stroke="#e0312f" stroke-width="1.4"/><rect x="119.5" y="528.3" width="9" height="6" fill="#8e8e8e"/><rect x="115" y="533.5" width="18" height="4.5" fill="#8e8e8e"/><rect x="117" y="538" width="14" height="8" fill="#d4d4d4"/><rect x="122.5" y="540" width="3" height="6" fill="#fff"/><rect x="142.4" y="530.5" width="12.8" height="2.2" fill="#e0312f"/><rect x="146.4" y="528.3" width="4.8" height="2.5" fill="#e0312f"/><path d="M143.2 534 H154.6 V546 H143.2Z" fill="#e0312f"/><path d="M146.2 535.5 V544.5 M148.9 535.5 V544.5 M151.6 535.5 V544.5" stroke="#f4c4c4" stroke-width="1.1"/><rect x="164.5" y="528" width="1" height="18" fill="#d4d4d4"/><path d="M172 528.5 H180 V541 H177 V532 H172Z" fill="#b4b4b4"/><rect x="175.5" y="532" width="11" height="14" fill="#fff"/><path d="M176 532.5 H181 V545.5 H176Z" fill="#c4c4c4"/><rect x="181.5" y="536" width="5" height="1.8" fill="#b0b0b0"/><rect x="181.5" y="539.5" width="5" height="1.8" fill="#b0b0b0"/><rect x="181.5" y="543" width="4" height="1.8" fill="#b0b0b0"/><path d="M198 528.5 L209 541 M212 528.5 L201 541" stroke="#c4c4c4" stroke-width="2.6"/><circle cx="200" cy="543" r="3" fill="none" stroke="#c4c4c4" stroke-width="2"/><circle cx="210" cy="543" r="3" fill="none" stroke="#c4c4c4" stroke-width="2"/><path d="M223 530.5 V544.5 H236.5 V530.5" fill="none" stroke="#e8a878" stroke-width="3"/><rect x="226" y="528" width="8" height="2.6" fill="#8e8e8e"/><rect x="226.5" y="532.5" width="7" height="1.6" fill="#8e8e8e"/><rect x="226.5" y="535.8" width="7" height="1.6" fill="#8e8e8e"/><rect x="226.5" y="539" width="7" height="1.6" fill="#8e8e8e"/><rect x="245" y="528" width="1" height="18" fill="#d4d4d4"/><circle cx="261" cy="537" r="9" fill="#b89868"/><path d="M256.5 541.5 L265.5 532" stroke="#222" stroke-width="1.3"/><circle cx="258" cy="535.5" r="1.2" fill="#2a7bd0"/><circle cx="261.5" cy="542" r="1.2" fill="#e0312f"/><circle cx="265" cy="539" r="1.2" fill="#3aa050"/><circle cx="257.5" cy="539.5" r="1.2" fill="#f0d040"/><circle cx="263" cy="533" r="1.1" fill="#fff"/><rect x="289" y="528" width="14" height="18" fill="#dcdcdc"/><rect x="292" y="535" width="8" height="2.6" fill="#b0b0b0"/><rect x="292" y="538" width="8" height="2.6" fill="#b8b8b8"/><rect x="314" y="528" width="14" height="18" fill="#dcdcdc"/><path d="M315.5 531 L326.5 543 M326.5 531 L315.5 543" stroke="#e0312f" stroke-width="2.2"/><rect x="336.5" y="528" width="1" height="18" fill="#d4d4d4"/><g transform="translate(343 528)"><path d="M2.5 0 H9 Q12.6 0 12.6 3.5 V11 H5 Q0 11 0 8 Q0 5 5 5 H9 V3.6 Q9 2.8 8.2 2.8 H2.5Z" fill="#2a84d2"/><rect x="3.6" y="6.9" width="5.4" height="2.2" fill="#fff"/></g><text x="355.5" y="542.5" font-family="Liberation Sans" font-size="8" fill="#2a84d2">s</text><circle cx="358.2" cy="544.6" r="1.3" fill="#2a84d2"/><g transform="translate(368 528)"><path d="M2.5 0 H9 Q12.6 0 12.6 3.5 V11 H5 Q0 11 0 8 Q0 5 5 5 H9 V3.6 Q9 2.8 8.2 2.8 H2.5Z" fill="#2a84d2"/><rect x="3.6" y="6.9" width="5.4" height="2.2" fill="#fff"/></g><circle cx="383.5" cy="536.4" r="1.3" fill="#2a84d2"/><text x="381" y="545.5" font-family="Liberation Sans" font-size="8" fill="#2a84d2">s</text><rect x="392.5" y="528" width="1" height="18" fill="#d4d4d4"/><rect x="399" y="528.6" width="15" height="2.4" fill="#8e8e8e"/><rect x="399" y="533" width="10" height="2.4" fill="#8e8e8e"/><rect x="404" y="538.8" width="13" height="2.4" fill="#8e8e8e"/><rect x="404" y="543.6" width="13" height="2.4" fill="#8e8e8e"/><path d="M399 537 L405 541.5 L399 546Z" fill="#e0312f"/><rect x="427" y="528.6" width="15" height="2.4" fill="#8e8e8e"/><rect x="431" y="533" width="11" height="2.4" fill="#8e8e8e"/><rect x="424.6" y="538.8" width="12.2" height="2.4" fill="#8e8e8e"/><rect x="424.6" y="543.6" width="12.2" height="2.4" fill="#8e8e8e"/><path d="M442 537 L436.5 541.5 L442 546Z" fill="#e0312f"/><rect x="448.5" y="528" width="1" height="18" fill="#d4d4d4"/><circle cx="464" cy="537" r="9" fill="#d8d2c4"/><circle cx="467.6" cy="537.0" r="1.6" fill="#e84040"/><circle cx="466.2" cy="539.8" r="1.6" fill="#f09030"/><circle cx="463.2" cy="540.5" r="1.6" fill="#f0d040"/><circle cx="460.8" cy="538.6" r="1.6" fill="#60c060"/><circle cx="460.8" cy="535.4" r="1.6" fill="#40a0e0"/><circle cx="463.2" cy="533.5" r="1.6" fill="#8060c0"/><circle cx="466.2" cy="534.2" r="1.6" fill="#e060a0"/><circle cx="465" cy="538" r="2" fill="#555"/><path d="M468.5 541.5 H474.5 L471.5 544.5Z" fill="#111"/><path d="M491 533.5 L494.5 536.5 L491 539.5 M495.5 533.5 L499 536.5 L495.5 539.5" fill="none" stroke="#111" stroke-width="1.6"/><g transform="translate(514 530) skewX(0)"><path d="M4 0 H13 Q18 0 18 4.5 V14 H7 Q0 14 0 10 Q0 6 7 6 H12.5 V4.5 Q12.5 3.6 11.5 3.6 H4Z" fill="#2a84d2"/><rect x="5" y="8.6" width="7.5" height="2.8" fill="#fff"/></g><g transform="translate(541.5 530) skewX(-14)"><path d="M4 0 H13 Q18 0 18 4.5 V14 H7 Q0 14 0 10 Q0 6 7 6 H12.5 V4.5 Q12.5 3.6 11.5 3.6 H4Z" fill="#2a84d2"/><rect x="5" y="8.6" width="7.5" height="2.8" fill="#fff"/></g><g transform="translate(564 528)"><path d="M4 0 H13 Q18 0 18 4.5 V15 H7 Q1 15 1 10.5 Q1 6 7 6 H14.5 V4.5 Q14.5 2.6 13 2.6 H4Z" fill="#2a84d2"/><rect x="4" y="8.8" width="10.5" height="3.6" fill="#fff"/></g><rect x="564" y="543" width="18" height="2.7" fill="#2a84d2"/><path d="M593 530 H601 Q605 530 605 533.5 V534.5 H601.5 V533.5 Q601.5 533 601 533 H593Z" fill="#2a84d2"/><path d="M601.5 539.5 H605 V545 H597 Q591 545 591 542 Q591 539.5 594 539.5 H594.5 V542.2 H601.5Z" fill="#2a84d2"/><rect x="589" y="536" width="18" height="2.6" fill="#2a84d2"/><rect x="613.5" y="528" width="1" height="18" fill="#d4d4d4"/><rect x="619" y="529.0" width="19" height="2.4" fill="#8e8e8e"/><rect x="619" y="533.6" width="12" height="2.4" fill="#8e8e8e"/><rect x="619" y="538.2" width="19" height="2.4" fill="#8e8e8e"/><rect x="619" y="542.8" width="12" height="2.4" fill="#8e8e8e"/><rect x="644" y="529.0" width="19" height="2.4" fill="#8e8e8e"/><rect x="647.5" y="533.6" width="12" height="2.4" fill="#8e8e8e"/><rect x="644" y="538.2" width="19" height="2.4" fill="#8e8e8e"/><rect x="647.5" y="542.8" width="12" height="2.4" fill="#8e8e8e"/><rect x="669" y="529.0" width="19" height="2.4" fill="#8e8e8e"/><rect x="676" y="533.6" width="12" height="2.4" fill="#8e8e8e"/><rect x="669" y="538.2" width="19" height="2.4" fill="#8e8e8e"/><rect x="676" y="542.8" width="12" height="2.4" fill="#8e8e8e"/><rect x="695" y="529.0" width="19" height="2.4" fill="#8e8e8e"/><rect x="695" y="533.6" width="19" height="2.4" fill="#8e8e8e"/><rect x="695" y="538.2" width="19" height="2.4" fill="#8e8e8e"/><rect x="695" y="542.8" width="19" height="2.4" fill="#8e8e8e"/></svg>
<div style="left:34px;top:552px;width:1086px;height:357px;overflow:hidden"><div class="t" style="left:9px;top:6.84px;font-size:12px;line-height:16px;letter-spacing:0.126px">choć nagrodzona prestiżowym literackim wyróżnieniem za debiutanckie opowiadanie, z trudem znajduje swoje miejsce w</div><div class="t" style="left:9px;top:20.84px;font-size:12px;line-height:16px;letter-spacing:0.049px">ksenofobicznym Londynie.</div><div class="t" style="left:9px;top:46.84px;font-size:12px;line-height:16px;letter-spacing:0.099px">W tej pięknej powieści Jessie Burton raz jeszcze porywa nas w czarowny świat sztuki i artystów, namacalnie wręcz dając</div><div class="t" style="left:9px;top:60.84px;font-size:12px;line-height:16px;letter-spacing:0.035px">odczuć atmosferę minionych dekad, pełną wewnętrznych napięć i niepokoju. Mądra i poruszająca książka o kobiecości, miłości,</div><div class="t" style="left:9px;top:74.84px;font-size:12px;line-height:16px;letter-spacing:0.052px">wolności i sztuce.</div><div class="t" style="left:9px;top:100.84px;font-size:12px;line-height:16px;letter-spacing:0.085px">Niełatwo powtórzyć spektakularny sukces debiutu, jakim była Miniaturzystka, przetłumaczona na 36 języków i sprzedana w</div><div class="t" style="left:9px;top:114.84px;font-size:12px;line-height:16px;letter-spacing:-0.056px">nakładzie miliona egzemplarzy. A jednak Jessie Burton się udało! Mistrzowski akord.</div><div class="t" style="left:9px;top:140.84px;font-size:12px;line-height:16px;letter-spacing:0.153px">Przykuwające uwagę postaci, zręcznie poprowadzona narracja, sugestywnie oddana atmosfera dwóch epok [rok 1936 w</div><div class="t" style="left:9px;top:154.84px;font-size:12px;line-height:16px;letter-spacing:0.052px">Hiszpanii i lata 60. w Londynie].</div><div class="t" style="left:9px;top:168.84px;font-size:12px;line-height:16px;letter-spacing:0.055px">„Library Journal”</div><div class="t" style="left:9px;top:194.84px;font-size:12px;line-height:16px;letter-spacing:0.113px">Oryginalna opowieść o wolności artystycznej, odnajdowaniu własnej formy ekspresji i poszukiwaniu twórczego odkupienia.</div><div class="t" style="left:9px;top:208.84px;font-size:12px;line-height:16px;letter-spacing:-0.015px">„Publishers Weekly”</div><div class="t" style="left:9px;top:234.84px;font-size:12px;line-height:16px;letter-spacing:0.1px">W twórczy sposób Burton wtapia w historyczne wątki zagadkę oszustwa o dalekosiężnych konsekwencjach, związku między</div><div class="t" style="left:9px;top:248.84px;font-size:12px;line-height:16px;letter-spacing:0.095px">sztuką a artystą i skomplikowanej trajektorii kobiecych pożądań.</div><div class="t" style="left:9px;top:262.84px;font-size:12px;line-height:16px;letter-spacing:0.029px">„Booklist”</div><div class="t" style="left:9px;top:288.84px;font-size:12px;line-height:16px;letter-spacing:-0.259px">Doskonała i mądra książka.</div><div class="t" style="left:9px;top:302.84px;font-size:12px;line-height:16px;letter-spacing:0.116px">„Elle”</div><div class="t" style="left:9px;top:328.84px;font-size:12px;line-height:16px;letter-spacing:-0.55px">Książka ma</div><div class="t" style="left:70px;top:328.84px;font-size:12px;line-height:16px;letter-spacing:0.2px">480 stron.</div></div>
<div style="left:33px;top:909px;width:84px;height:21px;background:#fff;border:1px solid #a0a0a0;border-top:none"></div>
<div class="t" style="left:44px;top:911.69px;font-size:11px;line-height:16px;letter-spacing:-0.2px">N<u>o</u>rmal view</div>
<div style="left:116px;top:910px;width:84px;height:19px;background:linear-gradient(#f0f0f0,#e5e5e5);border:1px solid #acacac;border-top:none"></div>
<div class="t" style="left:127px;top:910.69px;font-size:11px;line-height:16px;letter-spacing:-0.35px"><u>H</u>TML Source</div>
<div class="btn" style="left:23px;top:961px;width:469px;height:21px;"><span class="bt" style="left:0;right:0;text-align:center;line-height:19px;font-size:12px;font-weight:bold;"><u>D</u>ownload metadata</span><svg width="6" height="4" viewBox="0 0 6 4" style="position:absolute;right:2px;bottom:1px"><path d="M0 0.5 L6 0.5 L3 3.5Z" fill="#111"/></svg></div>
<div class="btn" style="left:499px;top:960px;width:172px;height:22px;"><svg width="18" height="18" viewBox="0 0 18 18" style="position:absolute;left:3px;top:1px"><circle cx="9" cy="9" r="8.5" fill="#e4e0d8"/><rect x="3.5" y="4" width="10" height="4.5" rx="2.2" fill="#5cb85c"/><rect x="3.5" y="9.5" width="10" height="4.5" rx="2.2" fill="#e04848"/><circle cx="11" cy="6.2" r="1.4" fill="#fff"/><circle cx="11" cy="11.8" r="1.4" fill="#fff"/></svg><span class="bt" style="left:23px;line-height:20px;font-size:11px;">Configure download metadata</span></div>
<div style="left:711px;top:496px;width:447px;height:499px;background:#f0f0f0;border:1px solid #4a8cb8"></div>
<div style="left:712px;top:497px;width:445px;height:26px;background:#6bc1ee"></div>
<svg style="left:712px;top:501px" width="16" height="16" viewBox="0 0 16 16"><circle cx="8" cy="8" r="7.8" fill="#5d8fd8"/><path d="M4 4.5 C5.5 4 7 4.5 7.6 5 V12 C7 11.5 5.5 11 4 11.5Z M12 4.5 C10.5 4 9 4.5 8.4 5 V12 C9 11.5 10.5 11 12 11.5Z" fill="#fff"/></svg>
<div class="t" style="left:733px;top:502.50px;font-size:13px;line-height:16px;letter-spacing:-0.2px">Customize LubimyCzytac</div>
<div class="t" style="left:1093.3px;top:499.45px;font-size:14px;line-height:16px;font-weight:bold;color:#111">?</div>
<div style="left:1111px;top:497px;width:47px;height:20px;background:#c75050"></div>
<svg style="left:1130.5px;top:503.5px" width="9" height="8" viewBox="0 0 9 8"><path d="M0.6 0.4 L8.4 7.6 M8.4 0.4 L0.6 7.6" stroke="#fff" stroke-width="1.8"/></svg>
<div class="gb" style="left:732px;top:550px;width:405px;height:218px;"></div>
<div class="t" style="left:738px;top:542.7px;font-size:11px;line-height:16px;background:#f0f0f0;padding:0 2px;letter-spacing:-0.15px">Downloaded metadata fields</div>
<div style="left:742px;top:566px;width:385px;height:192px;background:#fff;border:1px solid #828790"></div>
<div class="cb" style="left:747px;top:570px"><svg width="11" height="11" viewBox="0 0 11 11" style="position:absolute;left:0;top:0"><path d="M2.2 5.6 L4.6 8.6 L9.2 2" fill="none" stroke="#000" stroke-width="2.1"/></svg></div>
<div class="t" style="left:766px;top:568.54px;font-size:12px;line-height:16px;letter-spacing:-0.2px">Comments</div>
<div class="cb" style="left:831px;top:570px"><svg width="11" height="11" viewBox="0 0 11 11" style="position:absolute;left:0;top:0"><path d="M2.2 5.6 L4.6 8.6 L9.2 2" fill="none" stroke="#000" stroke-width="2.1"/></svg></div>
<div class="t" style="left:850px;top:568.54px;font-size:12px;line-height:16px;letter-spacing:-0.2px">Languages</div>
<div class="cb" style="left:913px;top:570px"><svg width="11" height="11" viewBox="0 0 11 11" style="position:absolute;left:0;top:0"><path d="M2.2 5.6 L4.6 8.6 L9.2 2" fill="none" stroke="#000" stroke-width="2.1"/></svg></div>
<div class="t" style="left:932px;top:568.54px;font-size:12px;line-height:16px;letter-spacing:-0.2px">Published date</div>
<div class="cb" style="left:1016px;top:570px"><svg width="11" height="11" viewBox="0 0 11 11" style="position:absolute;left:0;top:0"><path d="M2.2 5.6 L4.6 8.6 L9.2 2" fill="none" stroke="#000" stroke-width="2.1"/></svg></div>
<div class="t" style="left:1035px;top:568.54px;font-size:12px;line-height:16px;letter-spacing:-0.2px">Publisher</div>
<div class="cb" style="left:747px;top:587px"><svg width="11" height="11" viewBox="0 0 11 11" style="position:absolute;left:0;top:0"><path d="M2.2 5.6 L4.6 8.6 L9.2 2" fill="none" stroke="#000" stroke-width="2.1"/></svg></div>
<div class="t" style="left:766px;top:585.54px;font-size:12px;line-height:16px;letter-spacing:-0.2px">Rating</div>
<div class="cb" style="left:806px;top:587px"><svg width="11" height="11" viewBox="0 0 11 11" style="position:absolute;left:0;top:0"><path d="M2.2 5.6 L4.6 8.6 L9.2 2" fill="none" stroke="#000" stroke-width="2.1"/></svg></div>
<div class="t" style="left:825px;top:585.54px;font-size:12px;line-height:16px;letter-spacing:-0.8px">Series</div>
<div class="cb" style="left:861px;top:587px"><svg width="11" height="11" viewBox="0 0 11 11" style="position:absolute;left:0;top:0"><path d="M2.2 5.6 L4.6 8.6 L9.2 2" fill="none" stroke="#000" stroke-width="2.1"/></svg></div>
<div class="t" style="left:880px;top:585.54px;font-size:12px;line-height:16px;letter-spacing:-0.2px">Tags</div>
<div class="gb" style="left:732px;top:780px;width:405px;height:165px;"></div>
<div class="t" style="left:738px;top:773.2px;font-size:11px;line-height:16px;background:#f0f0f0;padding:0 2px;letter-spacing:-0.15px">Other options</div>
<div class="t" style="left:742px;top:800.19px;font-size:11px;line-height:16px;">Maximum title/author search matches to evaluate (1 = fastest):</div>
<div class="inp" style="left:1054px;top:797px;width:73px;height:20px;"><span class="it" style="left:2px;line-height:18px;font-size:11px;right:16px;overflow:hidden;">4</span><div class="spin"><div class="sp1"><svg width="6" height="4" viewBox="0 0 6 4"><path d="M0 3.5 L6 3.5 L3 0.5Z" fill="#111"/></svg></div><div class="sp2"><svg width="6" height="4" viewBox="0 0 6 4"><path d="M0 0.5 L6 0.5 L3 3.5Z" fill="#111"/></svg></div></div></div>
<div class="t" style="left:742px;top:826.19px;font-size:11px;line-height:16px;">Append to Tags field in the Metadata:</div>
<div class="inp bcombo" style="left:1054px;top:823px;width:73px;height:20px;"><span class="it" style="left:3px;line-height:18px;font-size:11px;right:16px;overflow:hidden;">Genres</span><svg width="9" height="5" viewBox="0 0 9 5" style="position:absolute;right:4px;top:50%;margin-top:-2px"><path d="M1 0 L8 0 L4.5 4.5Z" fill="#111"/></svg></div>
<div class="cb" style="left:742px;top:851px"></div>
<div class="t" style="left:760px;top:850.59px;font-size:11px;line-height:16px;">Append sources at the end of the comment</div>
<div class="cb" style="left:742px;top:874px"><svg width="11" height="11" viewBox="0 0 11 11" style="position:absolute;left:0;top:0"><path d="M2.2 5.6 L4.6 8.6 L9.2 2" fill="none" stroke="#000" stroke-width="2.1"/></svg></div>
<div class="t" style="left:760px;top:873.59px;font-size:11px;line-height:16px;">Append the number of pages at the end of the comment</div>
<div class="cb" style="left:742px;top:897px"><svg width="11" height="11" viewBox="0 0 11 11" style="position:absolute;left:0;top:0"><path d="M2.2 5.6 L4.6 8.6 L9.2 2" fill="none" stroke="#000" stroke-width="2.1"/></svg></div>
<div class="t" style="left:760px;top:896.59px;font-size:11px;line-height:16px;">Save the number of pages as the LCPAGES identifier</div>
<div class="cb" style="left:742px;top:920px"></div>
<div class="t" style="left:760px;top:919.59px;font-size:11px;line-height:16px;">Download the ISBN number from the LC</div>
<div class="btn" style="left:991px;top:961px;width:73px;height:21px;border-color:#3c9af0"><span class="bt" style="left:0;right:0;text-align:center;line-height:19px;font-size:11px;">OK</span></div>
<div class="btn" style="left:1072px;top:961px;width:73px;height:21px;"><span class="bt" style="left:0;right:0;text-align:center;line-height:19px;font-size:11px;">Cancel</span></div>
<svg width="1158" height="995" style="left:0;top:0"><rect x="169.5" y="396.5" width="69" height="28.5" fill="none" stroke="#3f9bf2" stroke-width="2"/><rect x="101" y="881" width="58" height="19" fill="none" stroke="#3f9bf2" stroke-width="2"/><path d="M208 424 L740 903 M208 424 L230 432 M208 424 L214 441" fill="none" stroke="#3f9bf2" stroke-width="2"/><path d="M160 881 L741 881 M160 881 L181 872 M160 881 L179 890" fill="none" stroke="#3f9bf2" stroke-width="2"/><rect x="413.5" y="439.5" width="69" height="28" fill="none" stroke="#1cb24b" stroke-width="3"/><path d="M237 425 L412 456 M412 456 L398 440 M412 456 L391 467" fill="none" stroke="#1cb24b" stroke-width="3"/></svg>
<div class="t" style="left:500px;top:443.15px;font-size:14px;line-height:16px;font-weight:bold;color:#1cb24b">#pages</div>
</body></html>
